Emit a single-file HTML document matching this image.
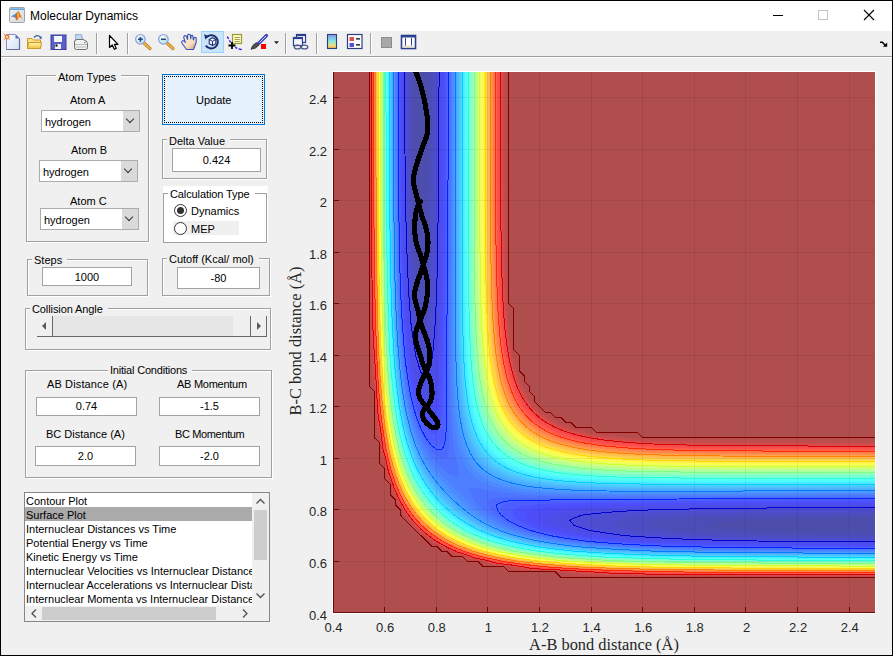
<!DOCTYPE html>
<html><head><meta charset="utf-8"><style>
*{box-sizing:border-box;margin:0;padding:0}
html,body{width:893px;height:656px;overflow:hidden;background:#f0f0f0}
body{position:relative;font-family:"Liberation Sans",sans-serif;font-size:11px;color:#000}
.a{position:absolute}
.t{position:absolute;white-space:nowrap;line-height:13px;font-size:11px;margin-top:1px}
.pn{position:absolute;border:1px solid #a0a0a0;box-shadow:inset 1px 1px 0 #fff,1px 1px 0 #fff}
.pt{position:absolute;white-space:nowrap;line-height:13px;font-size:11px;background:#f0f0f0;padding:0 5px 0 2px;margin-top:1px}
.ed{position:absolute;background:#fff;border:1px solid #a3a3a3;text-align:center;line-height:16px;font-size:11px}
.dd{position:absolute;background:#fff;border:1px solid #acacac}
.dd span{position:absolute;left:3px;top:5px;line-height:13px}
.dd i{position:absolute;right:0;top:0;bottom:0;width:16px;background:#dadada}
.dd i:after{content:"";position:absolute;left:4px;top:5px;width:5px;height:5px;border-right:1px solid #333;border-bottom:1px solid #333;transform:rotate(45deg)}
</style></head><body>
<!-- window frame -->
<div class="a" style="left:0;top:0;width:893px;height:656px;border:1px solid #000;z-index:50;pointer-events:none"></div>
<!-- title bar -->
<div class="a" style="left:1px;top:1px;width:891px;height:30px;background:#fff"></div>
<svg class="a" style="left:0;top:0" width="893" height="31" viewBox="0 0 893 31">
<defs><linearGradient id="tb" x1="0" y1="0" x2="0" y2="1"><stop offset="0" stop-color="#9cc8ec"/><stop offset="1" stop-color="#5a9ad4"/></linearGradient>
<linearGradient id="mw" x1="0" y1="0" x2="1" y2="1"><stop offset="0" stop-color="#f0f0f0"/><stop offset="1" stop-color="#d8d8d8"/></linearGradient></defs>
<rect x="9.5" y="7.5" width="15" height="15" rx="1" fill="url(#mw)" stroke="#a0a4a8"/>
<rect x="10" y="8" width="14" height="2" fill="url(#tb)"/>
<path d="M11 16.5L15 14L17.5 12L19.5 15.5L17 20.5L15.5 17.5Z" fill="#4a90d0"/>
<path d="M15 17L17.5 12L18.5 11L20 14L22 18.8L19.5 16.5L16.5 20.5Z" fill="#e06020"/>
<path d="M18 11.5L19.3 15L17.6 19.5L17.2 14Z" fill="#f8c020"/>
<!-- min/max/close -->
<rect x="773" y="15" width="10" height="1" fill="#000"/>
<rect x="818.5" y="10.5" width="9" height="9" fill="none" stroke="#c4c4c4"/>
<path d="M864 10L874 20M874 10L864 20" stroke="#000" stroke-width="1.1"/>
</svg>

<div class="t" style="left:30px;top:8px;font-size:12px;line-height:14px;letter-spacing:0">Molecular Dynamics</div>
<!-- toolbar -->
<div class="a" style="left:1px;top:31px;width:891px;height:25px;background:#f0f0f0"></div>
<div class="a" style="left:1px;top:56px;width:891px;height:1px;background:#a0a0a0"></div>
<div class="a" style="left:1px;top:57px;width:891px;height:1px;background:#fff"></div>
<svg class="a" style="left:0;top:0" width="893" height="60" viewBox="0 0 893 60">
<defs>
<linearGradient id="pg" x1="0" y1="0" x2="1" y2="1"><stop offset="0" stop-color="#ffffff"/><stop offset="1" stop-color="#cfe0f8"/></linearGradient>
<linearGradient id="fg" x1="0" y1="0" x2="0" y2="1"><stop offset="0" stop-color="#fff4b0"/><stop offset="1" stop-color="#f0c040"/></linearGradient>
<linearGradient id="cb" x1="0" y1="0" x2="0" y2="1"><stop offset="0" stop-color="#8f8fef"/><stop offset="0.45" stop-color="#80e8e0"/><stop offset="0.8" stop-color="#f0e080"/><stop offset="1" stop-color="#f0a050"/></linearGradient>
<radialGradient id="lg" cx="0.4" cy="0.4" r="0.6"><stop offset="0" stop-color="#ffffff"/><stop offset="1" stop-color="#a8e4ec"/></radialGradient>
</defs>
<!-- new -->
<path d="M6.5 34.5H15.5L19.5 38.5V49.5H6.5Z" fill="url(#pg)" stroke="#7f90d0"/>
<path d="M19.5 38.5V49.5H6.5" fill="none" stroke="#6c6c9c" stroke-width="1.2"/>
<path d="M15.5 34.5V38.5H19.5Z" fill="#5f6fb0"/>
<circle cx="7" cy="37" r="1.9" fill="#e8e070" stroke="#e8703a" stroke-width="1.2"/>
<g fill="#e8703a"><circle cx="4.4" cy="34.4" r=".6"/><circle cx="9.6" cy="34.4" r=".6"/><circle cx="4.4" cy="39.6" r=".6"/><circle cx="9.6" cy="39.6" r=".6"/></g>
<!-- open -->
<path d="M27.5 38.5H32L33.5 40H40.5V48.5H27.5Z" fill="#f8e088" stroke="#c89a20"/>
<path d="M28.5 42.5H41.5L40.5 48.5H27.5Z" fill="url(#fg)" stroke="#c89a20"/>
<path d="M34 37.5Q37 34 40.5 37" fill="none" stroke="#3a5a9a" stroke-width="1.2"/>
<path d="M39 37.8L41.8 36.2L41.4 39.4Z" fill="#3a5a9a"/>
<!-- save -->
<rect x="51" y="35" width="15" height="14.5" fill="#5a5ec8" stroke="#3d3f9a" stroke-width="1"/>
<rect x="54" y="36" width="8" height="6" fill="#f4f6ff"/>
<rect x="55" y="44" width="6" height="5" fill="#f0f0f0"/><rect x="55.5" y="44.5" width="2" height="2" fill="#000"/>
<!-- print -->
<path d="M75.5 34.5H81.5L83 40H75.5Z" fill="#bcd8f4" stroke="#8ea0c0" stroke-width=".8"/>
<path d="M74.5 42Q74.5 39.5 77 39.5H83Q87.5 40.5 87.5 43.5V47.5Q87.5 49.5 85.5 49.5H76.5Q74.5 49.5 74.5 47.5Z" fill="#f2f2f2" stroke="#707070"/>
<path d="M75 44.5H87M75.5 47H86.5" stroke="#a8a8a8" stroke-width=".8"/><rect x="84" y="42" width="1.5" height="1.2" fill="#40c040"/>
<!-- separators -->
<g fill="#a0a0a0"><rect x="96" y="33" width="1" height="21"/><rect x="127" y="33" width="1" height="21"/><rect x="285" y="33" width="1" height="21"/><rect x="316" y="33" width="1" height="21"/><rect x="370" y="33" width="1" height="21"/></g>
<g fill="#fff"><rect x="97" y="33" width="1" height="21"/><rect x="128" y="33" width="1" height="21"/><rect x="286" y="33" width="1" height="21"/><rect x="317" y="33" width="1" height="21"/><rect x="371" y="33" width="1" height="21"/></g>
<!-- arrow cursor -->
<path d="M109.5 35.5V47.5L112.3 45L114.3 49.3L116.3 48.4L114.4 44.3H118Z" fill="#fff" stroke="#000" stroke-width="1.2" stroke-linejoin="round"/>
<!-- zoom in -->
<path d="M144.5 43.5L150 48.5" stroke="#b07a20" stroke-width="3.2" stroke-linecap="round"/>
<path d="M144.5 43.5L150 48.5" stroke="#f0b040" stroke-width="2" stroke-linecap="round"/>
<circle cx="140.4" cy="39.3" r="4.8" fill="url(#lg)" stroke="#9a9ad8" stroke-width="1.2"/>
<path d="M138 39.3H142.8M140.4 36.9V41.7" stroke="#2b3f7f" stroke-width="1.6"/>
<!-- zoom out -->
<path d="M167.5 43.5L173 48.5" stroke="#b07a20" stroke-width="3.2" stroke-linecap="round"/>
<path d="M167.5 43.5L173 48.5" stroke="#f0b040" stroke-width="2" stroke-linecap="round"/>
<circle cx="163.4" cy="39.3" r="4.8" fill="url(#lg)" stroke="#9a9ad8" stroke-width="1.2"/>
<path d="M161 39.3H165.8" stroke="#2b3f7f" stroke-width="1.6"/>
<!-- hand -->
<defs><linearGradient id="hg" x1="0.2" y1="0.3" x2="0.8" y2="1"><stop offset="0" stop-color="#fdebd6"/><stop offset="0.6" stop-color="#f8dcc0"/><stop offset="1" stop-color="#e0a060"/></linearGradient></defs>
<path d="M186.5 49.5L181.5 42.5L182.5 40.8L184 40.8L185.3 42.5L183.6 37L184.6 35.6L186 35.8L187.6 39.5L187.6 35L188.6 34.3L190.2 34.5L190.7 39L191.3 35.5L192.7 35.3L193.3 40L194.5 37.3L196.2 37.8L196.2 42.5L195 45.5L193.5 49.5Z" fill="url(#hg)" stroke="#3558c0" stroke-width="1.1" stroke-linejoin="round"/>
<!-- rotate (active) -->
<rect x="201.5" y="31.5" width="22" height="21" fill="#cce4f7" stroke="#99d1ff"/>
<path d="M207.2 36.6A6.6 6.6 0 1 1 205.8 45.6" fill="none" stroke="#1f3070" stroke-width="2"/>
<path d="M204.2 34.2L209.2 36.2L205.2 39.6Z" fill="#1f3070"/>
<path d="M212.5 37.8L215.8 39.5V43.8L212.5 45.5L209.2 43.8V39.5Z" fill="#f4f8ff" stroke="#1f3070" stroke-width="1.1" stroke-linejoin="round"/>
<path d="M209.4 39.6L212.5 41.3L215.6 39.6M212.5 41.3V45.3" fill="none" stroke="#1f3070" stroke-width="1"/>
<!-- data cursor -->
<rect x="232.5" y="34.5" width="9" height="9" fill="#fdfac8" stroke="#9a9a30" stroke-width="1.2"/>
<path d="M234.5 37.5H239.8M234.5 39.5H239.8M234.5 41.5H239.8" stroke="#a8a050" stroke-width="1"/>
<path d="M227.3 36.6L228.6 38.8M229.4 40.4L230.6 42.3M235.2 47.3L237.3 48.3M238.6 48.8L241.8 49.6" stroke="#1a1aff" stroke-width="1.3"/>
<path d="M228.5 45.5H235.5M232 42V49" stroke="#000" stroke-width="1.8"/>
<!-- brush -->
<path d="M258.5 43.5L266.5 35.5" stroke="#3a48b8" stroke-width="3.2" stroke-linecap="round"/>
<path d="M259.5 42.5L266 36" stroke="#c8d0ff" stroke-width="1"/>
<path d="M251 49.3Q252 45 256.5 42.5L259 45Q256 49 251 49.3Z" fill="#505050" stroke="#303030" stroke-width=".8"/>
<rect x="261" y="44" width="5" height="5" fill="#ff0000"/>
<path d="M274 41.3H279L276.5 44Z" fill="#202020"/>
<!-- link -->
<rect x="296.5" y="34.5" width="9" height="8" fill="#fff" stroke="#2a3f8f" stroke-width="1.2"/>
<rect x="296.5" y="34.5" width="9" height="1.6" fill="#2a3f8f"/>
<rect x="293.5" y="37.5" width="9" height="8" fill="#f4f6fb" stroke="#2a3f8f" stroke-width="1.2"/>
<rect x="293.5" y="37.5" width="9" height="1.6" fill="#2a3f8f"/>
<ellipse cx="297.5" cy="47" rx="3.3" ry="1.9" fill="none" stroke="#4a5a8a" stroke-width="1.3"/>
<ellipse cx="304.5" cy="47" rx="3.3" ry="1.9" fill="none" stroke="#4a5a8a" stroke-width="1.3"/>
<!-- colorbar -->
<rect x="327.5" y="34.5" width="9" height="14" fill="url(#cb)" stroke="#2a3f7f" stroke-width="1.1"/>
<!-- legend -->
<rect x="347.5" y="34.5" width="14.5" height="14" fill="#fff" stroke="#2a3f7f" stroke-width="1.2"/>
<rect x="349.5" y="37" width="4.5" height="4" fill="#e05050"/><rect x="349.5" y="43" width="4.5" height="4" fill="#5050e0"/>
<path d="M356 38.8H360M356 44.8H360" stroke="#000" stroke-width="1.2"/>
<!-- hide plot tools -->
<rect x="381.5" y="37.5" width="10" height="10" fill="#a8a8a8" stroke="#8c8c8c"/>
<!-- show plot tools -->
<rect x="401.5" y="35.5" width="14" height="13" fill="#fff" stroke="#2a3f8f" stroke-width="1.6"/>
<rect x="401.5" y="35.5" width="14" height="2" fill="#2a3f8f"/>
<rect x="402.5" y="45.5" width="12" height="2" fill="#e8e0c0"/>
<path d="M405.5 38V45.5M411.5 38V45.5" stroke="#2a3f8f" stroke-width="1"/>
<!-- far right arrow -->
<path d="M880 42.3H882.3L885.5 45.5" fill="none" stroke="#000" stroke-width="1.5"/><path d="M882.8 46.8H887.2V42.4Z" fill="#000"/>
</svg>


<!-- Atom Types panel -->
<div class="pn" style="left:26px;top:75px;width:123px;height:167px"></div>
<div class="pt" style="left:56px;top:70px">Atom Types</div>
<div class="t" style="left:70px;top:93px">Atom A</div>
<div class="dd" style="left:41px;top:110px;width:99px;height:22px"><span>hydrogen</span><i></i></div>
<div class="t" style="left:71px;top:143px">Atom B</div>
<div class="dd" style="left:39px;top:160px;width:99px;height:22px"><span>hydrogen</span><i></i></div>
<div class="t" style="left:70px;top:194px">Atom C</div>
<div class="dd" style="left:40px;top:208px;width:99px;height:22px"><span>hydrogen</span><i></i></div>

<!-- Update button -->
<div class="a" style="left:162px;top:74px;width:103px;height:51px;background:#e5f1fb;border:1px solid #0078d7"></div>
<div class="a" style="left:164px;top:76px;width:99px;height:47px;border:1px dotted #000"></div>
<div class="t" style="left:196px;top:93px">Update</div>

<!-- Delta value -->
<div class="pn" style="left:162px;top:139px;width:105px;height:40px"></div>
<div class="pt" style="left:167px;top:134px">Delta Value</div>
<div class="ed" style="left:172px;top:148px;width:89px;height:24px;line-height:22px">0.424</div>

<!-- Calculation type -->
<div class="a" style="left:163px;top:186px;width:105px;height:57px;background:#fff"></div>
<div class="pn" style="left:163px;top:193px;width:104px;height:50px;box-shadow:none"></div>
<div class="pt" style="left:168px;top:187px;background:#fff;letter-spacing:-0.1px">Calculation Type</div>
<div class="a" style="left:173px;top:221px;width:66px;height:14px;background:#f0f0f0"></div>
<div class="a" style="left:174px;top:204px;width:13px;height:13px;border:1px solid #333;border-radius:50%;background:#fff"></div>
<div class="a" style="left:177px;top:207px;width:7px;height:7px;border-radius:50%;background:#333"></div>
<div class="t" style="left:191px;top:204px">Dynamics</div>
<div class="a" style="left:174px;top:222px;width:13px;height:13px;border:1px solid #333;border-radius:50%;background:#fff"></div>
<div class="t" style="left:191px;top:222px">MEP</div>

<!-- Steps -->
<div class="pn" style="left:27px;top:259px;width:121px;height:37px"></div>
<div class="pt" style="left:32px;top:253px">Steps</div>
<div class="ed" style="left:42px;top:267px;width:90px;height:19px;line-height:18px">1000</div>

<!-- Cutoff -->
<div class="pn" style="left:162px;top:258px;width:108px;height:38px"></div>
<div class="pt" style="left:167px;top:252px">Cutoff (Kcal/ mol)</div>
<div class="ed" style="left:177px;top:267px;width:83px;height:22px;line-height:20px">-80</div>

<!-- Collision angle -->
<div class="pn" style="left:25px;top:308px;width:246px;height:42px"></div>
<div class="pt" style="left:30px;top:302px;letter-spacing:-0.1px">Collision Angle</div>
<div class="a" style="left:37px;top:316px;width:230px;height:21px;background:#e6e6e6;border-bottom:1px solid #696969"></div>
<div class="a" style="left:37px;top:316px;width:16px;height:21px;background:#f0f0f0;border-right:1px solid #696969;border-bottom:1px solid #696969"></div>
<div class="a" style="left:42px;top:322px;width:0;height:0;border-top:4px solid transparent;border-bottom:4px solid transparent;border-right:4px solid #5a5a5a"></div>
<div class="a" style="left:233px;top:316px;width:18px;height:21px;background:#f0f0f0;border-right:1px solid #696969;border-bottom:1px solid #696969"></div>
<div class="a" style="left:251px;top:316px;width:16px;height:21px;background:#f0f0f0;border-right:1px solid #696969;border-bottom:1px solid #696969"></div>
<div class="a" style="left:257px;top:322px;width:0;height:0;border-top:4px solid transparent;border-bottom:4px solid transparent;border-left:4px solid #5a5a5a"></div>

<!-- Initial conditions -->
<div class="pn" style="left:25px;top:370px;width:247px;height:108px"></div>
<div class="pt" style="left:108px;top:363px;letter-spacing:-0.2px">Initial Conditions</div>
<div class="t" style="left:47px;top:377px;letter-spacing:0.13px">AB Distance (A)</div>
<div class="ed" style="left:36px;top:397px;width:101px;height:19px">0.74</div>
<div class="t" style="left:177px;top:377px;letter-spacing:-0.27px">AB Momentum</div>
<div class="ed" style="left:159px;top:397px;width:101px;height:19px">-1.5</div>
<div class="t" style="left:46px;top:427px">BC Distance (A)</div>
<div class="ed" style="left:35px;top:446px;width:101px;height:20px;line-height:18px">2.0</div>
<div class="t" style="left:175px;top:427px;letter-spacing:-0.36px">BC Momentum</div>
<div class="ed" style="left:159px;top:446px;width:101px;height:20px;line-height:18px">-2.0</div>

<!-- listbox -->
<div class="a" style="left:24px;top:492px;width:246px;height:130px;background:#fff;border:1px solid #828790;overflow:hidden">
  <div class="a" style="left:0;top:14px;width:227px;height:14px;background:#aaaaaa"></div>
  <div class="t" style="left:1px;top:0px;line-height:14px;letter-spacing:0">Contour Plot<br>Surface Plot<br>Internuclear Distances vs Time<br>Potential Energy vs Time<br>Kinetic Energy vs Time<br>Internuclear Velocities vs Internuclear Distance<br>Internuclear Accelerations vs Internuclear Distance<br>Internuclear Momenta vs Internuclear Distance</div>
  <div class="a" style="left:227px;top:0;width:17px;height:113px;background:#f0f0f0"></div>
  <div class="a" style="left:229px;top:17px;width:13px;height:50px;background:#cdcdcd"></div>
  <div class="a" style="left:0;top:113px;width:244px;height:15px;background:#f0f0f0"></div>
  <div class="a" style="left:17px;top:114px;width:174px;height:13px;background:#cdcdcd"></div>
  <svg class="a" style="left:0;top:0" width="246" height="130" viewBox="0 0 246 130">
<path d="M231.5 10.5L235.5 6.5L239.5 10.5" fill="none" stroke="#505050" stroke-width="1.3"/>
<path d="M231.5 100.5L235.5 104.5L239.5 100.5" fill="none" stroke="#505050" stroke-width="1.3"/>
<path d="M11 116.5L7 120.5L11 124.5" fill="none" stroke="#505050" stroke-width="1.3"/>
<path d="M218 116.5L222 120.5L218 124.5" fill="none" stroke="#505050" stroke-width="1.3"/>
</svg>

</div>

<!-- axes -->
<svg class="a" style="left:0;top:0" width="893" height="656" viewBox="0 0 893 656">
<defs><clipPath id="pc"><rect x="333" y="72" width="542" height="541"/></clipPath></defs>
<rect x="332" y="71" width="544" height="543" fill="#fff"/>
<g clip-path="url(#pc)">
<rect x="333" y="72" width="542" height="541" fill="#b04d4d"/>
<path fill="#b54d4d" d="M508.8 71.7 508.8 303.3 512.7 303.3 513.9 304.6 513.9 349.4 519.1 349.4 520.3 350.7 520.3 369.9 524.2 369.9 525.5 371.2 525.5 380.1 529.3 380.1 530.6 381.4 530.6 390.4 534.4 390.4 535.7 391.7 535.7 400.6 539.6 400.6 540.8 401.9 540.8 405.7 544.7 405.7 546.0 407.0 546.0 410.8 554.9 410.9 556.2 412.1 556.2 416.0 565.2 416.0 566.5 417.2 566.5 421.1 575.4 421.1 576.7 422.4 576.7 426.2 596.0 426.2 597.2 427.5 597.2 432.6 642.1 432.6 643.4 433.9 643.4 437.7 875.3 437.7 875.3 577.2 556.2 577.2 554.9 575.9 554.9 572.1 503.7 572.1 502.4 570.8 502.4 567.0 478.1 567.0 476.8 565.7 476.8 561.9 462.7 561.9 461.4 560.6 461.4 556.7 447.3 556.7 446.0 555.5 446.0 551.6 437.0 551.6 435.8 550.3 435.8 546.5 426.8 546.5 425.5 545.2 425.5 541.4 421.7 541.4 420.4 540.1 420.4 536.3 416.5 536.3 415.3 535.0 415.3 531.2 411.4 531.2 410.1 529.9 410.1 526.0 406.3 526.0 405.0 524.8 405.0 520.9 401.2 520.9 399.9 519.6 399.9 510.7 396.0 510.7 394.8 509.4 394.8 500.4 390.9 500.4 389.6 499.2 389.6 485.1 385.8 485.1 384.5 483.8 384.5 469.7 380.7 469.7 379.4 468.4 379.4 444.1 375.5 444.1 374.3 442.8 374.3 391.7 370.4 391.7 369.1 390.4 369.1 71.7 508.8 71.7Z"/>
<path fill="#bf4d4d" d="M506.2 71.7 506.3 144.6 506.5 201.0 507.2 267.5 507.7 303.3 508.0 309.7 508.8 320.2 509.7 322.5 510.4 325.1 511.5 331.5 512.2 339.2 512.8 350.7 513.9 357.0 515.2 358.9 516.5 362.2 517.2 366.1 517.8 371.2 519.1 376.0 520.3 377.4 521.3 378.9 522.5 382.7 523.2 386.5 524.2 388.5 525.5 389.5 526.8 391.3 528.0 394.1 528.9 396.8 529.3 397.5 530.6 398.3 531.6 399.3 532.8 401.9 534.4 403.9 535.7 404.8 536.6 405.7 537.5 407.0 539.6 409.1 540.8 409.9 541.8 410.8 542.7 412.1 544.7 413.7 547.3 415.0 548.3 416.0 549.1 417.2 549.8 417.7 552.5 418.5 555.3 419.8 557.1 421.1 558.1 422.4 560.1 423.3 563.9 424.1 566.9 424.9 569.0 426.1 570.6 427.5 575.4 428.7 581.9 429.5 585.7 430.5 587.8 431.3 589.6 432.6 596.0 433.7 608.8 434.5 616.5 435.3 621.6 436.2 624.1 436.9 626.5 437.7 637.0 438.6 643.4 438.8 715.1 439.7 783.0 440.2 875.3 440.3 875.3 576.7 669.0 576.6 625.4 576.5 598.5 576.2 580.6 575.7 571.6 575.1 567.8 574.5 565.2 573.9 562.6 572.9 561.5 572.1 556.2 571.7 530.6 571.2 524.2 571.0 517.8 570.5 515.2 570.1 512.7 569.4 510.7 568.3 509.6 567.0 508.8 566.8 503.7 566.3 493.4 565.9 487.0 565.2 484.5 564.4 482.7 563.1 481.5 561.9 478.1 561.2 472.9 560.8 467.8 560.1 466.5 559.7 465.2 558.9 464.5 558.0 463.9 556.7 462.7 556.2 455.0 555.2 453.7 554.9 452.4 554.4 451.1 553.7 450.2 552.9 449.3 551.6 447.3 550.8 443.5 549.9 441.3 549.1 439.6 547.9 438.7 546.5 437.0 545.5 434.5 544.7 433.2 544.1 432.1 542.7 431.5 541.4 430.6 540.9 429.4 540.6 426.8 539.5 424.2 537.9 423.1 536.3 421.7 535.0 419.1 533.6 418.0 532.4 417.4 531.2 416.5 530.0 415.3 529.0 414.0 528.4 412.8 527.3 411.4 524.7 410.1 523.4 408.5 522.2 406.9 519.6 405.8 517.1 405.5 515.8 405.0 515.0 403.7 514.3 402.3 513.2 401.7 512.0 400.9 509.4 399.9 507.7 398.5 506.8 397.3 505.2 396.4 503.0 395.6 499.2 394.8 497.2 393.5 496.3 392.7 495.3 391.5 492.8 391.0 490.2 390.2 483.8 389.6 482.5 388.4 481.9 387.5 481.2 386.7 480.0 386.0 477.4 385.6 473.6 385.2 468.4 384.5 465.0 383.2 463.8 382.0 462.0 381.5 460.8 380.9 458.2 380.4 451.8 380.0 442.8 379.4 436.9 378.1 435.8 377.0 433.9 376.3 431.3 375.8 427.5 375.1 416.0 374.7 390.4 374.3 385.1 373.5 384.0 372.4 381.4 371.8 378.9 371.3 375.0 370.6 364.8 370.2 346.9 369.9 318.7 369.7 273.9 369.6 71.7 506.2 71.7Z"/>
<path fill="#c94d4d" d="M503.7 71.7 503.7 143.4 504.3 201.0 505.1 241.9 506.6 303.3 507.3 314.9 508.8 330.9 509.8 335.3 510.4 339.2 511.7 350.7 512.5 355.8 513.9 362.4 515.3 366.1 516.4 371.2 517.8 376.3 519.1 379.8 520.6 382.7 521.8 386.5 524.2 391.4 525.5 393.1 527.3 396.8 529.3 399.9 534.4 406.3 540.2 412.1 546.7 417.2 549.8 419.3 552.4 420.4 555.2 422.4 560.1 424.7 563.9 426.0 566.8 427.5 570.3 428.7 575.4 430.1 580.6 431.2 584.2 432.6 590.8 434.0 596.0 434.9 607.5 436.1 611.3 436.7 615.8 437.7 630.6 439.1 642.1 439.8 720.3 441.8 752.3 442.3 788.2 442.7 875.3 442.9 875.3 576.3 689.5 576.1 638.2 575.8 608.8 575.5 592.1 575.1 580.6 574.4 572.9 573.4 570.3 572.9 567.9 572.1 554.9 571.1 533.2 570.6 526.8 570.2 521.6 569.8 519.1 569.4 516.5 568.8 513.9 567.8 512.6 567.0 508.8 566.3 503.7 565.7 494.7 565.2 489.3 564.4 487.0 563.7 485.8 563.1 484.3 561.9 478.1 560.5 472.9 560.0 469.5 559.3 467.8 558.7 466.5 557.8 465.6 556.7 462.8 555.5 457.6 554.8 455.0 554.1 453.7 553.5 452.9 552.9 451.6 551.6 448.5 550.3 444.7 549.2 443.5 548.7 442.2 547.8 440.9 546.5 434.5 543.4 433.6 542.7 432.8 541.4 431.9 540.6 430.6 539.9 429.4 539.5 427.9 538.8 426.3 537.6 425.1 536.3 423.0 534.7 420.1 532.4 417.7 529.9 414.0 526.3 411.7 523.5 410.1 521.3 408.9 520.1 407.6 518.5 406.9 517.1 406.5 515.8 405.8 514.5 405.0 513.7 403.7 512.8 403.0 512.0 399.9 505.5 398.6 504.3 397.7 503.0 397.2 501.7 396.0 497.9 394.8 494.8 392.9 492.8 392.2 491.2 391.6 488.9 390.9 483.6 389.6 480.9 388.4 479.7 387.7 478.7 387.2 477.4 386.4 473.6 385.9 468.4 384.8 463.3 384.5 462.2 383.3 460.8 382.6 459.5 381.9 456.9 381.2 451.8 380.7 442.8 380.1 437.7 379.4 433.9 378.1 431.7 377.2 428.8 376.3 422.4 375.8 412.1 375.3 391.7 374.3 378.8 373.5 376.3 372.7 372.5 371.9 364.8 371.3 353.3 370.8 336.6 370.5 307.2 370.3 253.4 370.1 71.7 503.7 71.7Z"/>
<path fill="#d24d4d" d="M502.7 71.7 502.8 175.4 503.4 236.8 503.7 254.5 505.6 303.3 506.6 318.7 507.5 329.1 508.8 339.9 511.4 355.8 513.9 367.4 516.5 376.3 518.3 381.4 520.4 386.5 524.2 394.2 526.5 398.1 529.3 402.3 534.4 408.5 539.5 413.4 544.3 417.2 548.5 420.1 552.4 422.4 560.1 426.2 565.2 428.2 570.3 430.0 581.9 433.3 592.1 435.4 606.8 437.7 611.3 438.3 622.9 439.5 638.2 440.7 694.6 442.9 725.4 443.4 761.3 443.7 875.3 443.8 875.3 575.8 694.6 575.6 648.5 575.4 619.0 575.0 603.6 574.6 592.1 574.1 581.9 573.2 574.8 572.1 558.3 570.8 534.4 570.0 524.2 569.2 519.1 568.2 515.8 567.0 508.9 565.7 496.0 564.6 490.9 563.8 488.3 562.9 486.4 561.9 483.2 560.9 471.6 558.9 469.1 558.0 467.2 556.7 464.0 555.3 462.7 554.9 458.6 554.2 456.3 553.6 454.9 552.9 453.3 551.6 452.4 551.2 444.7 548.2 443.5 547.5 442.2 546.3 435.8 543.1 434.5 542.1 432.4 540.1 429.4 538.6 428.1 537.8 426.6 536.3 423.0 533.7 420.4 531.2 417.8 528.9 415.3 526.0 412.7 523.5 410.1 519.8 408.6 518.4 407.8 517.1 406.3 514.0 404.3 512.0 403.3 510.7 400.1 504.3 398.9 503.0 398.2 501.7 395.2 494.0 394.8 493.2 393.5 491.6 392.8 490.2 392.2 487.9 391.5 483.8 390.9 482.1 389.6 479.3 388.4 477.4 387.9 476.1 387.2 473.6 386.5 468.4 385.5 463.3 384.5 460.1 383.2 457.7 382.3 454.4 381.6 449.2 380.7 437.7 379.4 430.7 378.2 427.5 377.6 424.9 376.7 417.2 376.2 408.3 375.5 388.3 374.3 371.8 373.1 364.8 372.3 354.5 371.7 341.7 371.3 325.1 370.9 293.1 370.7 247.0 370.6 71.7 502.7 71.7Z"/>
<path fill="#dc4d4d" d="M501.7 71.7 501.9 175.4 502.4 236.8 502.9 262.4 503.5 282.9 504.8 308.5 505.5 318.7 507.0 334.1 508.8 347.7 511.0 359.7 513.7 371.2 515.2 376.3 517.0 381.4 519.0 386.5 520.7 390.4 524.2 397.0 526.8 401.0 529.2 404.5 531.3 407.0 534.4 410.5 538.3 414.2 542.0 417.2 545.6 419.8 549.8 422.5 554.9 425.2 560.1 427.6 565.2 429.6 570.3 431.3 575.4 432.8 581.9 434.5 589.5 436.1 596.0 437.2 611.3 439.4 622.9 440.6 638.2 441.7 663.9 443.0 694.6 443.9 725.4 444.4 761.3 444.6 875.3 444.8 875.3 575.4 704.9 575.2 658.7 574.9 628.0 574.6 611.3 574.1 598.5 573.6 589.5 572.9 582.6 572.1 564.2 570.8 554.9 570.2 538.3 569.6 528.0 568.8 524.2 568.3 519.1 567.0 511.4 565.6 508.8 565.2 498.6 564.3 493.4 563.5 490.9 562.8 488.6 561.9 484.2 560.6 472.9 558.4 470.4 557.5 469.0 556.7 465.9 555.5 462.7 554.4 458.8 553.5 456.9 552.9 452.4 550.4 448.7 549.1 445.7 547.8 441.8 545.2 438.9 544.0 436.6 542.7 433.2 539.9 431.9 539.1 429.1 537.6 426.3 535.0 424.2 533.7 423.0 532.7 421.6 531.2 418.6 528.6 415.3 524.8 413.8 523.5 412.7 522.2 411.4 520.2 408.9 517.3 407.3 514.5 406.5 513.2 403.7 509.9 402.4 507.6 401.2 504.7 398.6 500.8 397.3 497.8 396.0 494.0 393.5 489.6 392.8 487.6 392.0 483.8 391.6 482.5 389.6 477.5 388.3 474.8 387.6 472.3 385.8 462.3 384.5 457.9 383.2 454.5 382.6 451.8 382.1 448.0 381.1 437.7 379.4 427.5 378.1 422.4 377.2 414.7 376.6 405.7 376.1 390.4 374.3 364.0 373.3 355.8 372.7 346.9 372.2 334.1 371.8 317.4 371.4 288.0 371.2 241.9 370.9 71.7 501.7 71.7Z"/>
<path fill="#e64d4d" d="M500.8 71.7 500.9 179.2 501.5 241.9 502.0 267.5 502.7 288.0 503.5 304.6 504.6 320.0 506.1 335.3 508.0 349.4 510.0 360.9 512.5 371.2 513.9 376.3 515.6 381.4 517.6 386.5 519.3 390.4 523.3 398.1 525.7 401.9 528.0 405.2 530.5 408.3 534.0 412.1 538.2 416.0 540.8 418.1 544.7 420.9 549.8 424.0 554.9 426.7 559.6 428.8 565.2 430.9 570.3 432.6 575.4 434.1 581.9 435.7 588.3 437.0 596.0 438.4 611.3 440.5 628.0 442.0 647.2 443.3 669.0 444.2 694.6 444.9 725.4 445.3 761.3 445.6 875.3 445.7 875.3 575.0 710.0 574.8 665.1 574.5 634.4 574.1 617.7 573.7 603.6 573.0 591.4 572.1 556.2 569.9 539.6 569.2 529.4 568.3 525.5 567.6 522.6 567.0 508.8 564.8 498.6 563.7 494.7 563.0 485.7 560.5 474.1 558.0 462.7 553.8 460.1 553.2 457.6 552.4 453.7 550.3 447.3 547.8 442.2 544.8 438.3 542.9 432.6 538.8 429.4 536.8 426.8 534.6 423.8 532.4 421.3 529.9 419.1 528.1 416.5 525.2 414.0 522.6 411.8 519.6 409.6 517.1 407.2 513.2 403.7 508.5 401.6 504.3 398.6 499.2 396.0 492.8 394.0 488.9 392.1 482.5 390.9 479.1 388.7 473.6 388.0 471.0 385.9 460.8 384.5 455.6 383.7 453.1 383.1 450.5 382.5 446.7 381.6 437.7 379.4 423.9 378.3 418.5 377.6 412.1 377.0 403.2 376.5 390.4 374.3 355.3 373.2 340.5 372.6 326.4 372.2 308.5 371.8 277.7 371.6 231.7 371.3 71.7 500.8 71.7Z"/>
<path fill="#f04d4d" d="M499.9 71.7 500.0 179.2 500.5 241.9 501.0 267.5 501.7 288.0 502.5 304.6 503.5 320.0 505.0 335.3 506.8 349.4 508.8 360.9 511.2 371.2 514.3 381.4 516.2 386.5 518.4 391.7 520.3 395.6 522.5 399.3 524.2 402.2 526.8 405.8 529.3 409.0 532.1 412.1 535.7 415.7 539.6 418.9 544.4 422.4 547.3 424.1 551.1 426.3 556.2 428.7 561.4 430.9 566.5 432.7 571.6 434.3 579.3 436.3 585.7 437.7 592.1 438.9 607.5 441.1 622.9 442.7 643.4 444.1 663.9 445.0 689.5 445.7 720.3 446.2 756.1 446.5 875.3 446.7 875.3 574.6 720.3 574.4 674.1 574.1 642.1 573.7 624.1 573.2 610.0 572.6 584.4 571.3 554.9 569.4 543.4 568.9 531.9 567.9 508.8 564.4 499.8 563.3 496.0 562.6 483.2 559.4 475.5 557.7 462.7 553.3 458.8 552.1 453.7 549.8 447.3 547.1 442.2 544.1 439.2 542.7 429.8 536.3 424.2 531.9 419.3 527.3 414.5 522.2 410.1 516.7 404.3 508.1 398.7 497.9 397.2 494.0 394.2 487.6 393.1 483.8 389.0 472.3 387.0 463.3 383.8 450.5 383.3 448.0 382.0 437.7 378.6 416.0 377.9 409.6 373.7 335.3 373.1 321.3 372.7 303.3 372.3 272.6 372.0 226.6 371.7 71.7 499.9 71.7Z"/>
<path fill="#fa4d4d" d="M498.9 71.7 499.0 179.2 499.6 241.9 500.1 267.5 500.7 288.0 501.6 307.2 502.7 322.5 504.2 337.9 505.9 350.7 508.5 364.8 511.0 375.0 513.9 384.2 516.9 391.7 519.4 396.8 521.6 400.6 525.9 407.0 529.3 411.2 531.9 413.9 535.4 417.2 539.6 420.7 543.4 423.3 547.3 425.7 550.5 427.5 556.2 430.2 561.4 432.2 566.5 434.0 571.6 435.5 579.3 437.5 592.1 440.0 607.5 442.2 622.9 443.7 643.4 445.1 663.9 446.0 689.5 446.7 720.3 447.2 756.1 447.4 875.3 447.6 875.3 574.3 725.4 574.0 679.2 573.7 648.5 573.3 625.4 572.6 592.1 571.2 544.7 568.5 534.4 567.6 498.6 562.5 475.5 557.1 458.8 551.5 447.3 546.4 439.6 542.2 430.8 536.3 425.5 532.1 420.2 527.3 415.3 522.0 410.3 515.8 404.2 506.8 399.4 497.9 394.4 486.4 389.3 471.0 383.6 446.7 378.9 413.4 378.2 407.0 376.0 371.2 374.9 349.4 373.7 320.0 373.1 296.9 372.7 265.0 372.4 221.4 372.1 71.7 498.9 71.7Z"/>
<path fill="#ff524d" d="M498.0 71.7 498.1 179.2 498.6 241.9 499.1 267.5 499.7 288.0 500.6 307.2 501.7 322.5 503.1 337.9 504.8 350.7 507.3 364.8 509.7 375.0 512.5 384.0 515.5 391.7 519.3 399.3 520.8 401.9 524.2 407.1 528.0 411.9 530.6 414.7 534.4 418.3 537.8 421.1 540.8 423.3 546.0 426.5 549.8 428.6 554.9 431.0 560.1 433.1 565.2 434.9 570.3 436.5 576.7 438.1 583.1 439.5 590.8 441.0 606.2 443.1 622.9 444.8 642.1 446.1 663.9 447.0 689.5 447.7 720.3 448.1 756.1 448.4 875.3 448.6 875.3 573.9 725.4 573.6 679.2 573.2 648.5 572.7 611.3 571.6 580.6 570.2 544.7 568.0 538.3 567.5 529.3 566.4 502.4 562.6 496.0 561.4 476.8 556.9 467.8 554.0 458.8 550.8 449.9 547.0 447.3 545.7 439.6 541.5 431.8 536.3 425.5 531.3 420.4 526.6 415.3 521.1 411.0 515.8 405.0 506.8 399.4 496.6 394.8 485.6 389.5 469.7 385.3 451.8 384.0 445.4 380.0 417.2 378.5 404.5 376.4 371.2 375.2 345.6 374.0 311.0 373.5 289.3 373.0 257.3 372.8 215.0 372.5 71.7 498.0 71.7Z"/>
<path fill="#ff5d4d" d="M497.0 71.7 497.1 179.2 497.6 241.9 498.1 267.5 498.7 288.0 499.7 308.5 500.7 323.8 502.2 339.2 504.0 353.3 506.3 366.1 508.8 376.3 510.3 381.4 512.1 386.5 514.1 391.7 515.8 395.5 519.2 401.9 521.6 405.8 524.2 409.4 526.8 412.6 530.6 416.7 534.4 420.2 537.2 422.4 540.8 424.9 544.8 427.5 549.8 430.1 554.9 432.5 560.1 434.5 565.2 436.2 570.3 437.7 576.7 439.3 583.1 440.7 590.8 442.1 606.2 444.2 622.9 445.8 642.1 447.1 663.9 448.0 689.5 448.6 720.3 449.1 756.1 449.3 875.3 449.5 875.3 573.5 730.5 573.2 684.4 572.8 653.6 572.3 617.7 571.4 581.9 569.9 546.0 567.7 530.6 566.0 503.7 562.3 498.6 561.4 488.3 559.1 479.3 557.0 475.5 555.9 462.4 551.6 457.6 549.7 450.3 546.5 440.9 541.5 431.9 535.6 426.3 531.2 420.7 526.0 415.9 520.9 411.4 515.3 405.0 505.8 399.9 496.2 394.8 484.0 389.7 468.4 386.1 453.1 384.1 442.8 381.2 422.4 379.9 412.1 378.8 401.9 376.8 371.2 375.8 349.4 374.7 320.0 373.8 282.9 373.4 252.2 373.2 208.6 372.9 71.7 497.0 71.7Z"/>
<path fill="#ff684d" d="M496.1 71.7 496.2 180.5 496.7 244.5 497.1 267.5 497.8 289.3 498.6 308.5 499.8 325.1 501.2 340.5 503.1 354.5 505.1 366.1 507.5 376.3 509.0 381.4 510.7 386.5 512.6 391.7 514.3 395.5 516.9 400.6 519.1 404.4 520.7 407.0 523.5 410.8 525.6 413.4 529.3 417.5 534.4 422.1 537.0 424.0 540.8 426.7 544.7 429.0 549.8 431.6 554.9 433.9 560.1 435.8 565.2 437.5 570.3 439.0 576.7 440.6 583.1 441.9 590.8 443.3 606.2 445.3 622.9 446.9 642.1 448.1 663.9 449.0 689.5 449.6 720.3 450.1 756.1 450.3 875.3 450.4 875.3 573.1 721.5 572.7 679.2 572.3 639.5 571.5 601.1 570.3 570.3 568.8 544.7 567.1 524.2 564.8 503.7 561.8 493.4 559.8 480.6 556.8 472.9 554.5 464.0 551.6 451.6 546.5 440.9 540.8 433.9 536.3 427.3 531.2 420.4 524.8 415.6 519.6 411.6 514.5 408.0 509.4 405.0 504.6 399.9 494.9 394.8 482.4 390.3 468.4 387.8 458.2 384.5 442.6 381.6 422.4 380.2 410.8 379.2 400.6 377.5 375.0 376.3 350.7 375.1 318.7 374.4 288.0 373.9 252.2 373.6 211.2 373.3 71.7 496.1 71.7Z"/>
<path fill="#ff744d" d="M495.1 71.7 495.2 184.3 495.7 247.0 496.2 272.6 496.9 293.1 497.8 312.3 498.9 327.7 500.4 343.0 502.1 355.8 503.4 363.5 504.7 369.9 507.3 380.1 508.9 385.3 510.7 390.4 513.9 397.9 516.0 401.9 518.2 405.7 522.7 412.1 525.9 416.0 529.3 419.4 532.6 422.4 535.9 424.9 539.6 427.5 544.7 430.5 549.8 433.1 554.6 435.2 560.1 437.2 565.2 438.8 570.3 440.3 576.7 441.8 583.1 443.1 590.8 444.4 606.2 446.4 622.9 447.9 642.1 449.1 663.9 450.0 689.5 450.6 720.3 451.0 756.1 451.3 875.3 451.4 875.3 572.7 726.7 572.3 679.2 571.8 642.1 571.2 602.4 570.0 570.3 568.4 546.0 566.7 524.2 564.3 513.9 562.9 503.7 561.3 493.4 559.3 482.4 556.7 472.9 554.0 465.6 551.6 462.2 550.3 453.0 546.5 447.3 543.7 440.9 540.1 435.0 536.3 430.6 533.1 426.7 529.9 421.2 524.8 416.4 519.6 412.4 514.5 409.6 510.7 405.5 504.3 400.1 494.0 396.0 484.3 394.8 480.9 390.8 468.4 389.6 464.1 387.1 453.1 384.5 439.7 381.4 417.2 379.4 397.8 377.9 375.0 376.6 349.4 375.6 320.0 374.8 286.7 374.3 252.2 374.0 206.1 373.7 71.7 495.1 71.7Z"/>
<path fill="#ff7f4d" d="M494.2 71.7 494.3 184.3 494.8 247.0 495.3 272.6 495.9 293.1 496.7 309.7 497.7 326.4 499.0 340.5 501.0 355.8 503.3 368.6 505.7 378.9 508.4 387.8 509.8 391.7 512.0 396.8 514.4 401.9 516.5 405.5 519.1 409.6 520.9 412.1 524.2 416.2 526.8 418.9 530.4 422.4 534.4 425.7 538.3 428.3 542.1 430.7 545.7 432.6 551.1 435.1 556.2 437.2 561.4 439.0 566.5 440.5 574.2 442.4 587.0 444.9 602.4 447.1 617.7 448.6 638.2 449.9 658.7 450.8 684.4 451.5 715.1 451.9 751.0 452.2 875.3 452.3 875.3 572.3 786.9 572.2 725.4 571.9 678.0 571.4 637.0 570.6 601.1 569.5 570.3 568.0 547.3 566.4 524.2 563.9 509.7 561.9 503.7 560.8 493.4 558.8 484.5 556.7 478.1 555.0 467.2 551.6 462.7 549.9 454.4 546.5 447.3 543.0 442.2 540.2 436.0 536.3 430.6 532.3 426.8 529.1 421.7 524.3 417.3 519.6 413.2 514.5 410.1 510.4 406.3 504.4 400.8 494.0 398.5 488.9 394.8 479.3 390.9 466.8 389.6 462.0 387.6 453.1 385.6 442.8 384.5 436.8 381.9 417.2 379.8 396.8 378.1 371.2 376.9 345.6 376.0 318.7 375.2 282.9 374.7 247.0 374.4 201.0 374.0 71.7 494.2 71.7Z"/>
<path fill="#ff8a4d" d="M493.2 71.7 493.3 184.3 493.8 247.0 494.3 272.6 494.9 293.1 495.8 313.6 496.9 328.9 498.3 344.3 500.2 358.4 502.6 371.2 505.0 380.9 506.6 386.5 508.4 391.7 511.4 398.7 512.9 401.9 515.7 407.0 520.1 413.4 523.2 417.2 525.6 419.8 529.3 423.4 533.2 426.5 536.4 428.8 540.8 431.6 544.7 433.7 549.8 436.1 554.9 438.1 560.1 439.9 565.2 441.4 571.6 443.1 578.0 444.5 585.7 445.9 593.4 447.1 602.4 448.2 617.7 449.6 638.2 451.0 658.7 451.8 684.4 452.5 715.1 452.9 752.3 453.2 875.3 453.3 875.3 571.9 788.2 571.8 725.4 571.4 679.2 571.0 637.0 570.2 601.1 569.1 570.3 567.6 548.5 566.0 524.2 563.4 513.9 562.0 506.2 560.8 498.6 559.3 486.6 556.7 478.1 554.4 468.9 551.6 462.7 549.3 455.8 546.5 447.3 542.3 443.3 540.1 437.0 536.2 430.6 531.5 425.5 527.1 421.7 523.4 418.2 519.6 413.9 514.5 410.2 509.4 407.0 504.3 404.7 500.4 401.2 493.4 399.1 488.9 395.6 480.0 392.0 468.4 389.6 459.9 388.1 453.1 386.1 442.8 384.5 433.8 382.3 417.2 380.2 396.8 378.7 376.3 377.5 350.7 376.4 320.0 375.7 288.0 375.2 252.2 374.8 206.1 374.4 71.7 493.2 71.7Z"/>
<path fill="#ff954d" d="M492.3 71.7 492.4 184.3 492.8 247.0 493.3 272.6 493.9 293.1 494.8 313.6 495.8 328.9 497.4 345.6 499.3 359.7 501.4 371.2 503.8 381.4 505.3 386.5 507.0 391.7 509.0 396.8 510.7 400.6 514.1 407.0 516.5 410.9 519.1 414.5 521.3 417.2 524.8 421.1 528.9 424.9 532.1 427.5 535.7 430.0 539.8 432.6 544.7 435.2 549.8 437.5 554.9 439.5 560.1 441.2 565.2 442.7 571.6 444.3 578.0 445.7 585.7 447.1 601.1 449.1 617.7 450.7 637.0 451.9 658.7 452.8 684.4 453.5 715.1 453.9 751.0 454.1 875.3 454.2 875.3 571.5 788.2 571.3 725.4 571.0 674.1 570.5 633.1 569.7 597.2 568.5 566.3 567.0 544.7 565.2 524.2 563.0 515.9 561.9 508.0 560.6 498.6 558.8 488.3 556.6 478.1 553.9 470.7 551.6 467.0 550.3 457.2 546.5 447.3 541.7 444.5 540.1 437.0 535.4 431.9 531.7 426.8 527.4 424.0 524.8 420.2 520.9 415.3 515.2 411.0 509.4 407.7 504.3 405.0 499.7 402.1 494.0 399.9 489.2 396.0 479.5 394.8 475.8 392.5 468.4 389.6 457.7 387.6 448.0 385.7 437.7 384.5 430.6 383.4 422.4 382.2 412.1 380.7 396.8 379.4 380.1 377.9 350.7 376.8 320.0 376.1 288.0 375.6 252.2 375.2 206.1 374.9 71.7 492.3 71.7Z"/>
<path fill="#ffa04d" d="M491.3 71.7 491.4 184.3 491.8 247.0 492.3 272.6 492.9 293.1 493.8 313.6 494.8 330.2 496.3 345.6 498.3 360.9 500.4 372.5 503.2 384.0 506.1 392.9 507.6 396.8 509.8 401.9 512.5 407.0 513.9 409.5 515.6 412.1 519.1 416.9 524.2 422.6 529.3 427.2 531.9 429.1 535.0 431.3 539.6 434.1 544.7 436.7 549.8 439.0 554.9 440.9 560.1 442.6 565.2 444.0 571.6 445.6 578.0 446.9 585.7 448.2 602.4 450.4 617.7 451.8 638.2 453.0 658.7 453.8 684.4 454.4 715.1 454.9 751.0 455.1 875.3 455.2 875.3 571.1 788.2 570.9 725.4 570.6 674.1 570.1 633.1 569.3 601.1 568.3 573.2 567.0 549.8 565.2 534.4 563.7 524.2 562.5 519.1 561.9 508.8 560.2 498.6 558.3 488.3 556.1 472.4 551.6 467.8 550.0 457.6 546.0 451.1 542.9 445.8 540.1 439.5 536.3 432.3 531.2 424.9 524.8 420.4 520.2 415.5 514.5 411.8 509.4 409.2 505.6 405.4 499.2 402.8 494.0 399.9 487.7 396.4 478.7 394.8 474.1 393.1 468.4 389.6 455.4 388.1 448.0 385.8 435.5 384.5 427.4 383.2 417.2 381.1 396.8 379.4 373.5 378.3 350.7 377.2 320.0 376.5 288.0 376.0 252.2 375.6 204.8 375.3 71.7 491.3 71.7Z"/>
<path fill="#ffab4d" d="M490.4 71.7 490.4 185.6 490.9 252.2 491.4 277.7 492.0 298.2 492.8 314.9 493.9 331.5 495.2 345.6 497.1 360.9 498.4 368.6 499.7 375.0 502.3 385.3 503.8 390.4 505.6 395.5 508.8 403.0 510.9 407.0 513.1 410.8 517.5 417.2 520.8 421.1 524.2 424.6 527.4 427.5 530.7 430.0 534.4 432.7 539.6 435.7 544.7 438.2 549.5 440.3 554.9 442.3 560.1 443.9 565.2 445.3 571.6 446.8 578.0 448.1 585.7 449.4 601.1 451.4 617.7 452.8 637.0 454.0 658.7 454.8 684.4 455.4 715.1 455.8 751.0 456.1 875.3 456.2 875.3 570.7 788.2 570.5 725.4 570.2 674.1 569.7 633.1 568.9 601.1 567.9 575.4 566.7 549.8 564.8 534.4 563.2 524.2 562.1 513.9 560.6 503.7 558.8 493.4 556.7 488.3 555.5 472.9 551.2 462.7 547.5 457.6 545.3 447.0 540.1 440.6 536.3 433.4 531.2 425.8 524.8 420.8 519.6 416.4 514.5 410.1 505.8 405.0 497.0 401.2 489.1 399.9 486.2 397.0 478.7 394.8 472.2 392.2 463.3 389.6 453.1 386.7 437.7 384.3 422.4 383.1 412.1 381.6 396.8 380.0 376.3 378.8 354.5 377.8 323.8 377.0 289.3 376.4 252.2 376.1 206.1 375.7 71.7 490.4 71.7Z"/>
<path fill="#ffb64d" d="M489.4 71.7 489.5 184.3 489.9 247.0 490.3 272.6 490.9 294.4 491.7 313.6 492.7 330.2 494.0 345.6 496.0 360.9 497.9 372.5 500.6 384.0 503.3 392.9 504.7 396.8 506.8 401.9 509.3 407.0 511.4 410.8 515.7 417.2 519.1 421.4 522.4 424.9 525.1 427.5 529.3 430.9 533.2 433.5 537.0 435.9 540.8 437.9 546.0 440.3 551.1 442.3 556.2 444.1 561.4 445.6 569.0 447.5 581.9 450.0 597.2 452.1 612.6 453.5 633.1 454.9 653.6 455.7 679.2 456.3 710.0 456.8 747.2 457.0 875.3 457.1 875.3 570.3 788.2 570.1 725.4 569.8 674.1 569.3 633.1 568.5 601.1 567.5 575.4 566.2 549.8 564.3 526.4 561.9 508.8 559.2 498.6 557.3 490.4 555.5 478.1 552.2 472.9 550.6 462.7 546.8 458.9 545.2 451.1 541.6 447.3 539.5 441.8 536.3 434.5 531.2 431.9 529.1 426.8 524.7 421.7 519.6 416.5 513.6 413.4 509.4 410.1 504.6 405.0 495.7 399.9 484.6 396.0 474.2 394.8 470.3 392.8 463.3 390.2 453.1 387.2 437.7 384.5 420.2 382.1 396.8 380.7 379.1 379.3 355.8 378.2 325.1 377.5 293.1 376.9 257.3 376.5 209.9 376.1 71.7 489.4 71.7Z"/>
<path fill="#ffc24d" d="M488.4 71.7 488.5 189.4 488.9 252.2 489.4 277.7 490.0 298.2 490.9 318.7 491.9 334.1 493.5 350.7 495.4 364.8 497.5 376.3 500.0 386.5 501.5 391.7 503.2 396.8 506.5 404.5 508.3 408.3 510.5 412.1 513.0 416.0 515.2 419.1 517.9 422.4 521.6 426.3 524.3 428.8 529.2 432.6 534.4 436.0 537.4 437.7 540.8 439.5 545.5 441.6 549.8 443.3 554.9 445.0 560.6 446.7 567.8 448.5 580.6 450.9 588.3 452.1 597.2 453.2 612.6 454.6 633.1 455.9 653.6 456.7 679.2 457.3 710.0 457.7 747.2 458.0 875.3 458.1 875.3 569.9 788.2 569.7 725.4 569.4 678.0 568.9 637.0 568.2 601.1 567.1 576.7 565.8 551.1 563.9 529.3 561.7 519.1 560.3 508.8 558.6 498.6 556.8 492.8 555.5 478.1 551.6 467.8 548.1 460.5 545.2 452.2 541.4 447.3 538.7 442.2 535.7 435.6 531.2 429.3 526.0 425.5 522.5 420.4 517.1 415.3 510.8 410.1 503.3 404.9 494.0 399.9 483.0 396.5 473.6 394.8 468.3 390.8 453.1 389.6 448.0 387.7 437.7 386.1 427.5 384.6 417.2 382.5 396.8 380.7 372.1 379.5 349.4 378.6 323.8 377.9 293.1 377.3 257.3 376.9 209.9 376.5 71.7 488.4 71.7Z"/>
<path fill="#ffcd4d" d="M487.5 71.7 487.5 189.4 487.9 252.2 488.4 277.7 488.9 298.2 489.8 318.7 490.8 334.1 492.3 350.7 494.2 364.8 496.2 376.3 498.6 386.5 500.1 391.7 501.8 396.8 503.8 401.9 505.5 405.7 508.8 412.1 512.0 417.2 513.9 419.9 517.1 423.6 520.3 427.1 524.2 430.6 526.8 432.6 530.3 435.2 534.4 437.7 539.6 440.4 544.7 442.7 549.8 444.7 554.9 446.4 560.1 447.9 566.5 449.5 572.9 450.8 580.6 452.1 597.2 454.3 612.6 455.7 632.7 456.9 653.6 457.7 679.2 458.3 710.0 458.7 747.2 459.0 875.3 459.0 875.3 569.4 788.2 569.3 725.4 568.9 678.0 568.5 637.0 567.7 610.1 567.0 580.6 565.6 551.1 563.5 539.6 562.4 529.3 561.2 519.1 559.8 508.8 558.1 501.2 556.7 493.4 555.0 483.2 552.4 478.1 551.0 467.8 547.5 462.1 545.2 451.2 540.1 442.4 535.0 436.8 531.2 430.6 526.3 425.5 521.5 420.4 516.1 416.0 510.7 411.5 504.3 410.1 502.0 405.0 492.8 401.2 484.4 399.9 481.3 397.1 473.6 394.8 466.3 390.9 451.2 389.6 445.3 388.3 437.7 386.6 427.5 385.1 417.2 384.5 412.1 383.0 396.8 381.1 371.2 379.9 349.4 379.0 325.1 378.3 293.1 377.7 257.3 377.3 209.9 376.9 71.7 487.5 71.7Z"/>
<path fill="#ffd84d" d="M486.5 71.7 486.5 189.4 486.9 253.4 487.4 277.7 488.0 299.5 488.8 318.7 489.9 336.6 491.2 350.7 493.2 366.1 494.5 373.7 495.8 380.1 498.4 390.4 501.3 399.3 504.5 407.0 507.1 412.1 508.8 415.0 511.1 418.5 513.9 422.3 517.3 426.2 519.9 428.8 524.2 432.6 527.7 435.2 530.6 437.1 534.4 439.4 539.6 442.0 544.7 444.2 549.8 446.1 554.9 447.8 560.1 449.2 566.5 450.7 572.9 452.0 580.6 453.3 597.2 455.4 612.6 456.8 631.8 457.9 653.6 458.8 679.2 459.4 710.0 459.7 745.9 459.9 875.3 460.0 875.3 569.0 788.2 568.8 725.4 568.5 674.1 568.0 633.1 567.2 602.4 566.2 575.4 564.8 549.8 562.9 538.9 561.9 529.3 560.7 519.1 559.3 504.0 556.7 497.9 555.5 488.3 553.2 482.3 551.6 472.9 548.6 466.9 546.5 457.6 542.5 452.4 540.0 445.7 536.3 442.2 534.0 436.3 529.9 431.5 526.0 425.9 520.9 421.1 515.8 416.5 510.2 412.4 504.3 410.1 500.7 405.0 491.3 401.6 483.8 399.9 479.6 396.1 468.4 394.8 464.2 390.9 448.7 388.8 437.7 385.7 417.2 384.5 407.7 383.5 396.8 381.8 375.0 380.4 350.7 379.4 323.3 378.7 293.1 378.2 257.3 377.8 209.9 377.3 71.7 486.5 71.7Z"/>
<path fill="#ffe34d" d="M485.5 71.7 485.5 190.7 486.0 257.3 486.4 282.9 487.0 303.3 487.8 320.0 488.8 336.6 490.1 350.7 492.0 366.1 493.3 373.7 494.5 380.1 497.0 390.4 498.6 395.5 500.3 400.6 503.6 408.3 505.5 412.1 507.7 416.0 512.1 422.4 515.3 426.2 519.0 430.0 521.9 432.6 525.5 435.4 529.3 438.1 534.4 441.0 539.6 443.6 543.4 445.2 549.8 447.5 554.9 449.1 565.6 451.8 571.6 453.0 580.6 454.5 596.0 456.4 612.6 457.9 631.8 459.0 653.6 459.8 679.2 460.4 710.0 460.7 745.9 460.9 875.3 461.0 875.3 568.6 730.5 568.2 679.2 567.7 639.9 567.0 606.2 565.9 580.6 564.6 551.1 562.5 543.6 561.9 532.5 560.6 519.1 558.7 506.9 556.7 498.6 555.0 488.3 552.6 480.2 550.3 468.7 546.5 457.6 541.8 452.4 539.2 447.1 536.3 440.9 532.3 435.8 528.5 431.1 524.8 425.7 519.6 421.0 514.5 416.9 509.4 413.3 504.3 410.1 499.4 405.0 489.8 399.9 477.7 395.2 463.3 391.4 448.0 389.3 437.7 386.2 417.2 385.0 407.0 383.9 396.8 382.3 375.0 380.9 349.4 379.9 323.8 379.1 294.4 378.6 257.3 378.2 209.9 377.8 71.7 485.5 71.7Z"/>
<path fill="#ffee4d" d="M484.5 71.7 484.6 190.7 485.0 257.3 485.4 282.9 486.0 303.3 486.9 323.8 487.9 339.2 489.5 355.8 491.4 369.9 493.5 381.4 496.0 391.7 497.6 396.8 499.3 401.9 502.6 409.6 503.8 412.1 506.7 417.2 508.8 420.4 511.2 423.6 514.3 427.5 517.8 431.0 520.3 433.3 524.2 436.4 528.1 439.0 532.4 441.6 535.7 443.3 540.8 445.7 544.7 447.2 551.1 449.4 556.2 450.9 563.9 452.7 576.7 455.1 585.7 456.4 593.4 457.3 610.0 458.8 628.0 459.9 652.3 460.8 679.2 461.4 710.0 461.7 745.9 461.9 875.3 462.0 875.3 568.2 730.5 567.7 684.4 567.3 647.2 566.7 612.6 565.7 581.9 564.2 554.9 562.4 544.7 561.5 534.4 560.3 524.2 558.9 510.0 556.7 503.4 555.5 493.4 553.2 486.8 551.6 478.1 549.0 470.6 546.5 462.7 543.3 456.3 540.4 448.5 536.3 442.2 532.3 438.8 529.9 432.3 524.8 426.8 519.7 422.0 514.5 418.8 510.7 415.3 505.9 411.4 500.1 408.0 494.0 405.4 488.9 401.2 479.2 399.9 475.9 396.0 464.1 394.8 459.7 393.1 453.1 390.9 443.1 389.6 436.5 386.7 417.2 384.5 397.8 382.8 375.0 381.3 349.4 380.3 323.8 379.4 288.0 378.9 252.2 378.6 206.1 378.2 71.7 484.5 71.7Z"/>
<path fill="#fff94d" d="M483.6 71.7 483.6 190.7 484.0 257.3 484.4 282.9 484.9 303.3 485.8 323.8 486.8 339.2 488.3 355.8 490.2 369.9 492.2 381.4 494.7 391.7 496.1 396.8 497.9 401.9 499.9 407.0 501.6 410.8 505.0 417.2 508.3 422.4 510.2 424.9 513.4 428.8 516.5 431.9 519.1 434.2 523.5 437.7 527.3 440.3 530.6 442.3 534.4 444.3 539.6 446.7 544.7 448.7 549.8 450.4 554.9 451.9 561.4 453.5 567.8 454.8 575.4 456.2 583.1 457.3 592.1 458.3 607.5 459.7 626.7 460.9 648.5 461.7 674.1 462.3 704.9 462.7 742.0 462.9 875.3 463.0 875.3 567.8 788.2 567.6 725.4 567.3 684.4 566.9 643.4 566.1 611.3 565.1 580.6 563.7 554.3 561.9 534.4 559.7 513.2 556.7 503.7 554.9 493.4 552.6 484.6 550.3 472.9 546.7 462.7 542.6 457.3 540.1 450.0 536.3 447.3 534.7 440.0 529.9 435.0 526.0 429.2 520.9 424.2 515.8 419.8 510.7 415.3 504.6 411.7 499.2 409.5 495.3 406.2 488.9 403.8 483.8 399.9 474.0 396.5 463.3 394.8 457.3 392.6 448.0 389.6 433.3 386.6 412.1 384.5 392.3 382.9 369.9 381.6 344.3 380.6 318.7 379.8 282.9 379.4 252.2 379.0 204.8 378.6 71.7 483.6 71.7Z"/>
<path fill="#f9ff52" d="M482.6 71.7 482.6 190.7 483.0 257.3 483.4 282.9 483.9 304.6 484.7 323.8 485.8 340.5 487.2 355.8 488.9 369.9 490.9 381.4 493.4 392.2 496.4 401.9 498.3 407.0 500.6 412.1 503.2 417.2 504.8 419.8 506.4 422.4 509.2 426.2 512.5 430.0 515.0 432.6 519.1 436.3 522.6 439.0 529.3 443.3 534.4 445.9 539.6 448.2 544.7 450.1 549.8 451.8 554.9 453.2 561.4 454.8 567.8 456.1 575.4 457.4 592.1 459.5 607.5 460.8 628.0 462.0 648.5 462.8 675.4 463.4 704.9 463.7 742.0 463.9 875.3 463.9 875.3 567.4 735.6 566.9 684.4 566.4 645.2 565.7 611.3 564.7 580.6 563.2 560.1 561.8 546.6 560.6 534.4 559.2 524.2 557.8 513.9 556.3 503.7 554.3 491.7 551.6 483.2 549.2 474.5 546.5 461.7 541.4 452.4 536.8 449.3 535.0 442.2 530.5 437.0 526.7 431.9 522.4 429.0 519.6 425.2 515.8 420.4 510.2 415.9 504.3 412.6 499.2 410.1 495.0 406.3 487.5 404.6 483.8 400.9 474.8 397.2 463.3 394.3 453.1 392.1 442.8 390.1 432.6 387.8 417.2 385.3 395.5 383.8 376.3 382.3 349.4 381.2 320.0 380.4 288.0 379.8 247.0 379.4 203.0 379.0 71.7 482.6 71.7Z"/>
<path fill="#eeff5d" d="M481.6 71.7 481.6 194.6 481.9 257.3 482.3 282.9 482.8 303.3 483.6 323.8 484.6 340.5 486.0 355.8 487.9 371.2 489.9 382.7 492.6 394.2 495.4 403.2 496.8 407.0 499.0 412.1 501.5 417.2 503.7 420.9 508.2 427.5 511.4 431.1 513.9 433.8 518.4 437.7 521.8 440.3 525.5 442.8 529.3 445.0 534.4 447.6 539.6 449.7 544.7 451.6 549.8 453.2 554.9 454.6 561.4 456.1 567.8 457.3 575.4 458.6 590.8 460.5 607.5 461.9 626.7 463.0 648.5 463.8 674.1 464.4 704.9 464.7 742.0 464.9 875.3 464.9 875.3 566.9 792.0 566.7 730.5 566.4 679.2 565.9 642.1 565.1 602.4 563.8 571.6 562.2 551.1 560.5 529.3 558.0 520.3 556.7 512.8 555.5 503.7 553.7 493.4 551.4 488.3 550.0 476.6 546.5 472.9 545.2 462.7 541.1 457.6 538.6 450.8 535.0 442.7 529.9 437.5 526.0 430.1 519.6 425.5 515.0 420.7 509.4 416.9 504.3 414.4 500.4 410.5 494.0 407.8 488.9 405.0 483.1 401.2 473.6 399.9 469.9 397.9 463.3 394.8 452.2 392.7 442.8 390.7 432.6 389.6 426.3 388.4 417.2 385.8 394.6 384.3 376.3 382.8 349.4 381.6 318.7 380.8 284.1 380.2 247.0 379.8 201.0 379.4 71.7 481.6 71.7Z"/>
<path fill="#e3ff68" d="M480.6 71.7 480.6 195.8 480.9 262.4 481.4 288.0 481.9 308.5 482.8 328.9 483.8 344.3 485.2 359.7 487.1 373.7 489.4 386.5 491.9 396.8 493.4 401.9 495.2 407.0 498.6 414.7 500.5 418.5 502.7 422.4 507.3 428.8 510.6 432.6 513.9 436.0 517.5 439.0 520.3 441.2 524.2 443.8 529.3 446.7 534.4 449.2 538.3 450.8 544.7 453.1 548.9 454.4 554.9 456.0 560.1 457.1 566.5 458.4 575.4 459.8 590.8 461.7 607.5 463.1 626.7 464.1 648.5 464.9 674.1 465.4 740.8 465.9 875.3 465.9 875.3 566.4 788.2 566.2 725.4 565.9 679.2 565.4 638.2 564.5 602.4 563.3 574.3 561.9 551.1 559.9 529.3 557.5 524.0 556.7 513.9 555.1 503.7 553.1 493.4 550.7 478.1 546.3 467.8 542.4 462.7 540.2 452.3 535.0 446.0 531.2 438.9 526.0 437.0 524.6 431.3 519.6 426.2 514.5 421.7 509.3 415.3 500.4 411.4 494.0 408.7 488.9 406.2 483.8 404.0 478.7 400.1 468.4 398.5 463.3 394.8 449.5 390.9 430.3 389.6 422.5 388.3 412.1 386.1 391.7 384.5 372.4 383.1 345.6 382.0 314.9 381.3 282.9 380.7 242.6 380.3 201.0 379.9 71.7 480.6 71.7Z"/>
<path fill="#d8ff74" d="M479.6 71.7 479.5 195.8 479.9 262.4 480.3 288.0 480.8 308.5 481.7 328.9 482.7 344.3 484.2 360.9 485.8 373.7 488.1 386.5 490.5 396.8 492.0 401.9 493.7 407.0 495.7 412.1 497.5 416.0 501.1 422.7 503.7 426.6 506.3 430.0 508.8 433.1 512.7 437.0 515.2 439.2 519.1 442.2 524.2 445.6 528.0 447.7 533.2 450.2 537.0 451.8 542.1 453.7 548.4 455.6 554.9 457.3 560.1 458.5 566.5 459.7 575.4 461.1 589.5 462.7 607.5 464.2 626.7 465.2 648.5 466.0 674.1 466.5 740.8 466.9 875.3 466.9 875.3 566.0 786.9 565.8 726.7 565.4 679.2 564.9 638.2 564.0 607.5 563.0 580.6 561.7 565.2 560.6 554.9 559.7 539.6 558.1 529.3 556.9 519.1 555.3 508.8 553.5 499.8 551.6 494.6 550.3 483.2 547.2 478.1 545.5 467.8 541.7 464.2 540.1 456.3 536.3 452.4 534.1 447.3 531.0 440.2 526.0 437.0 523.5 431.9 519.0 426.8 513.9 421.7 507.9 415.4 499.2 410.1 490.2 405.0 479.4 401.2 469.3 399.2 463.3 396.3 453.1 394.8 446.7 391.0 427.5 389.6 418.4 388.8 412.1 386.6 391.7 384.9 369.9 383.8 349.4 382.6 318.7 381.8 284.1 381.2 247.0 380.8 201.0 380.4 71.7 479.6 71.7Z"/>
<path fill="#cdff7f" d="M478.6 71.7 478.5 195.8 478.9 262.4 479.2 288.0 479.8 309.7 480.6 328.9 481.6 345.6 483.0 360.9 484.7 375.0 486.7 386.5 489.4 398.1 492.2 407.0 494.1 412.1 496.4 417.2 498.6 421.4 500.7 424.9 502.4 427.6 505.2 431.3 508.5 435.2 511.4 438.0 515.2 441.3 519.0 444.1 523.0 446.7 526.8 448.8 530.6 450.7 535.7 452.9 539.6 454.4 546.0 456.4 552.4 458.1 560.1 459.8 572.9 462.0 588.3 463.8 604.9 465.2 622.9 466.2 645.9 467.0 672.8 467.5 740.8 467.9 875.3 467.9 875.3 565.5 792.0 565.3 730.5 565.0 683.1 564.4 642.1 563.7 607.5 562.6 581.9 561.3 570.3 560.5 554.9 559.2 532.4 556.7 523.7 555.5 513.9 553.8 503.7 551.8 497.3 550.3 483.2 546.5 472.9 542.8 466.1 540.1 458.0 536.3 455.6 535.0 447.3 530.0 441.6 526.0 435.3 520.9 430.6 516.6 425.5 511.2 421.7 506.5 416.4 499.2 413.3 494.0 410.1 488.5 405.0 477.4 401.7 468.4 399.9 463.2 397.1 453.1 394.8 443.8 391.7 427.5 389.6 414.1 387.2 391.7 385.5 371.2 384.3 350.7 383.1 320.0 382.3 288.0 381.8 252.2 381.3 204.8 380.9 71.7 478.6 71.7Z"/>
<path fill="#c2ff8a" d="M477.5 71.7 477.5 195.8 477.8 262.4 478.2 288.0 478.7 309.7 479.5 328.9 480.4 345.6 481.8 360.9 483.7 376.3 485.7 388.4 488.3 399.3 491.1 408.3 492.5 412.1 494.7 417.2 497.3 422.3 498.8 424.9 501.1 428.5 504.1 432.6 507.5 436.4 510.1 439.0 513.9 442.4 517.8 445.3 521.6 447.7 525.5 449.9 529.3 451.8 534.4 454.0 539.6 455.9 544.7 457.5 549.8 458.9 556.2 460.3 562.6 461.6 570.3 462.9 587.0 464.9 602.4 466.1 622.9 467.3 643.4 468.0 671.6 468.5 740.8 469.0 875.3 469.0 875.3 565.0 792.0 564.8 730.5 564.5 683.1 563.9 642.1 563.2 606.2 562.0 581.9 560.7 554.9 558.6 534.4 556.4 524.2 554.9 513.9 553.1 505.9 551.6 498.6 549.9 488.3 547.2 483.2 545.7 472.9 542.1 467.8 540.0 457.3 535.0 450.7 531.2 442.2 525.4 436.6 520.9 431.1 515.8 426.3 510.7 421.7 505.1 417.4 499.2 415.3 495.8 410.1 486.6 406.4 478.7 405.0 475.3 401.2 464.7 399.9 460.7 397.8 453.1 395.2 442.8 392.3 427.5 390.9 418.7 389.6 409.5 387.8 391.7 385.8 367.0 384.5 344.3 383.6 318.7 382.8 288.0 382.3 252.2 381.8 204.8 381.4 71.7 477.5 71.7Z"/>
<path fill="#b6ff95" d="M476.5 71.7 476.5 201.0 476.8 267.5 477.2 293.1 477.7 313.6 478.6 334.1 479.6 349.4 481.1 366.1 482.8 378.9 485.1 391.7 487.6 401.9 489.1 407.0 490.9 412.1 494.2 419.8 496.0 423.3 498.5 427.5 503.0 433.9 506.2 437.6 509.0 440.3 512.7 443.5 516.5 446.3 519.1 448.1 524.2 451.0 529.3 453.5 534.4 455.6 539.6 457.4 544.7 458.9 549.8 460.3 556.2 461.7 570.3 464.1 585.7 466.0 602.4 467.3 621.6 468.3 643.4 469.1 669.0 469.6 735.6 470.0 875.3 470.0 875.3 564.5 792.0 564.3 730.5 564.0 684.4 563.5 643.4 562.7 615.2 561.9 588.7 560.6 561.4 558.6 539.6 556.4 529.3 555.0 519.1 553.4 509.1 551.6 503.3 550.3 488.3 546.5 478.1 543.1 470.2 540.1 461.7 536.3 457.6 534.1 452.3 531.2 444.6 526.0 442.2 524.2 436.5 519.6 431.1 514.5 425.5 508.4 421.7 503.6 418.5 499.2 415.3 494.2 411.4 487.3 409.7 483.8 405.1 473.6 401.2 462.3 399.9 458.2 398.5 453.1 396.0 443.3 394.8 437.4 393.0 427.5 390.9 414.3 389.6 404.5 388.8 396.8 386.9 375.0 385.4 350.7 384.4 328.9 383.4 293.1 382.8 252.2 382.3 206.1 381.9 71.7 476.5 71.7Z"/>
<path fill="#abffa0" d="M475.5 71.7 475.4 201.0 475.7 267.5 476.1 293.1 476.7 314.9 477.4 334.1 478.5 350.7 479.8 366.1 481.6 380.1 483.7 391.7 486.1 401.9 487.6 407.0 489.3 412.1 491.3 417.2 493.1 421.1 495.1 424.9 497.3 428.7 499.8 432.5 501.9 435.2 505.0 438.7 508.8 442.4 512.4 445.4 515.2 447.5 519.1 450.0 524.2 452.8 529.3 455.2 533.2 456.7 539.6 458.9 544.7 460.4 554.9 462.8 561.4 464.0 570.3 465.4 585.7 467.2 602.4 468.5 621.6 469.5 643.4 470.2 669.0 470.6 735.6 471.1 875.3 471.0 875.3 564.0 792.0 563.8 730.5 563.4 684.4 563.0 643.4 562.2 612.6 561.2 587.0 559.9 560.1 557.9 547.4 556.7 539.6 555.8 519.1 552.8 512.6 551.6 503.7 549.7 493.4 547.2 488.3 545.7 478.1 542.3 472.2 540.1 463.6 536.3 461.0 535.0 452.4 530.2 446.1 526.0 439.5 520.9 435.8 517.7 431.9 514.0 425.5 507.0 420.4 500.3 416.5 494.5 411.2 485.1 406.0 473.6 404.1 468.4 401.2 459.8 399.9 455.6 397.9 448.0 394.8 433.9 391.3 412.1 389.4 396.8 387.2 371.2 385.8 347.5 384.6 318.7 383.9 293.1 383.3 252.2 382.9 206.1 382.4 71.7 475.5 71.7Z"/>
<path fill="#a0ffab" d="M474.4 71.7 474.4 201.0 474.7 267.5 475.0 293.1 475.5 314.9 476.3 334.1 477.3 350.7 478.6 366.1 480.5 381.4 482.5 392.9 484.0 399.3 485.3 404.5 488.2 413.4 489.6 417.2 491.9 422.4 494.6 427.5 496.2 430.0 498.6 433.6 501.1 436.9 503.7 439.8 506.7 442.8 510.1 445.7 513.9 448.7 518.9 451.8 522.9 454.0 528.0 456.3 531.9 457.9 536.4 459.5 542.1 461.2 548.5 462.8 554.9 464.2 561.4 465.4 569.0 466.5 584.4 468.3 601.1 469.6 620.3 470.5 643.4 471.3 669.0 471.7 735.6 472.1 875.3 472.1 875.3 563.5 735.6 563.0 689.5 562.5 650.4 561.9 612.6 560.6 587.0 559.3 560.1 557.4 553.2 556.7 540.8 555.3 529.3 553.7 516.3 551.6 508.8 550.1 498.6 547.7 489.3 545.2 478.1 541.5 467.8 537.3 463.0 535.0 455.8 531.2 452.4 529.1 446.0 524.8 440.9 520.9 435.1 515.8 430.6 511.3 425.5 505.5 420.7 499.2 417.3 494.0 415.3 490.6 411.4 483.5 409.2 478.7 405.0 468.7 401.5 458.2 399.9 452.8 398.7 448.0 396.3 437.7 394.8 430.3 391.9 412.1 389.6 393.4 387.8 371.2 386.3 345.6 385.2 320.0 384.4 293.1 383.8 252.2 383.4 206.1 382.9 71.7 474.4 71.7Z"/>
<path fill="#95ffb6" d="M473.4 71.7 473.3 206.1 473.6 272.6 474.0 298.2 474.5 318.7 475.2 335.3 476.2 352.0 477.3 366.1 479.2 381.4 481.4 394.2 482.8 400.6 484.1 405.7 486.1 412.1 487.5 416.0 490.7 423.6 492.7 427.5 495.0 431.3 497.3 434.7 499.6 437.7 503.0 441.6 505.6 444.1 508.8 446.9 512.7 449.8 516.5 452.3 520.1 454.4 524.2 456.4 529.3 458.6 534.4 460.4 539.6 462.0 544.7 463.4 551.1 464.9 557.5 466.1 565.2 467.3 581.9 469.3 597.2 470.5 616.5 471.5 638.2 472.3 663.9 472.7 730.5 473.1 875.3 473.1 875.3 563.0 792.0 562.8 730.5 562.4 679.2 561.9 648.5 561.3 616.5 560.2 585.7 558.6 559.6 556.7 539.6 554.5 519.1 551.4 508.8 549.4 496.6 546.5 492.1 545.2 480.2 541.4 467.8 536.3 462.7 533.8 455.5 529.9 447.6 524.8 442.5 520.9 435.2 514.5 430.6 509.9 425.8 504.3 421.7 498.8 418.5 494.0 415.3 488.9 411.4 481.5 410.1 478.7 405.8 468.4 401.2 454.4 399.9 449.9 398.2 442.8 396.0 433.1 394.8 426.4 391.9 407.0 389.6 387.0 388.0 364.8 386.6 339.2 385.6 313.6 384.7 277.7 384.2 241.9 383.8 199.7 383.4 71.7 473.4 71.7Z"/>
<path fill="#8affc2" d="M472.3 71.7 472.3 206.1 472.6 272.6 472.9 298.2 473.4 320.0 474.2 339.2 475.1 354.5 476.6 371.2 478.4 385.3 480.5 396.8 482.9 407.0 484.5 412.1 486.2 417.2 489.6 425.0 491.5 428.8 493.8 432.6 496.4 436.4 498.6 439.3 501.7 442.8 505.0 446.0 508.8 449.2 512.5 451.8 516.5 454.3 520.3 456.4 524.2 458.2 529.3 460.3 534.4 462.0 539.6 463.6 544.7 464.9 551.1 466.3 557.5 467.5 565.2 468.6 581.9 470.5 597.2 471.7 616.5 472.7 638.2 473.4 663.9 473.8 730.5 474.2 875.3 474.1 875.3 562.5 788.2 562.3 726.7 561.9 684.4 561.4 648.5 560.7 612.6 559.5 581.9 557.8 560.1 556.1 539.6 553.8 524.2 551.6 519.1 550.7 508.8 548.6 499.7 546.5 493.4 544.8 482.7 541.4 478.1 539.7 469.9 536.3 462.7 532.7 457.6 530.0 451.2 526.0 446.0 522.3 442.2 519.3 436.7 514.5 431.6 509.4 426.8 503.9 420.4 495.2 416.4 488.9 413.7 483.8 410.1 476.6 406.7 468.4 405.0 463.8 403.2 458.2 399.9 446.8 397.8 437.7 395.7 427.5 394.8 422.3 393.3 412.1 390.6 390.4 389.0 371.2 387.4 344.3 386.2 313.6 385.3 282.9 384.7 247.0 384.4 206.1 383.9 71.7 472.3 71.7Z"/>
<path fill="#7fffcd" d="M471.3 71.7 471.2 209.9 471.4 272.6 471.8 298.2 472.3 320.0 473.0 339.2 474.0 355.8 475.3 371.2 477.0 385.3 479.0 396.8 481.4 407.0 482.8 412.1 484.5 417.2 486.5 422.4 488.3 426.2 492.2 433.3 494.7 437.2 497.3 440.5 499.8 443.4 503.7 447.2 507.5 450.4 510.1 452.3 513.9 454.8 519.1 457.6 524.2 460.0 528.0 461.5 534.4 463.7 539.6 465.1 549.8 467.5 557.5 468.9 565.2 470.0 580.6 471.7 597.2 472.9 616.5 473.9 638.2 474.5 663.9 474.9 730.5 475.3 875.3 475.2 875.3 562.0 793.3 561.8 730.5 561.4 679.2 560.8 643.4 559.9 607.5 558.6 575.4 556.8 554.9 554.9 534.4 552.4 528.6 551.6 519.1 549.9 503.7 546.7 498.6 545.4 488.3 542.3 483.2 540.6 472.9 536.6 469.3 535.0 461.7 531.2 457.6 528.8 452.4 525.6 445.9 520.9 439.7 515.8 435.8 512.1 431.9 508.2 426.8 502.2 420.8 494.0 416.5 487.1 414.7 483.8 409.8 473.6 406.3 464.8 404.1 458.2 401.2 448.5 399.9 443.6 396.0 425.3 394.8 417.9 393.3 407.0 390.9 386.5 389.5 369.9 387.8 340.5 386.6 309.7 385.8 277.7 385.3 241.9 384.8 195.8 384.4 71.7 471.3 71.7Z"/>
<path fill="#74ffd8" d="M470.2 71.7 470.1 211.2 470.3 273.9 470.6 298.2 471.1 320.0 471.8 339.2 472.7 355.8 474.0 371.2 475.8 386.5 477.8 398.1 479.2 404.5 480.5 409.6 483.3 418.5 484.7 422.4 487.0 427.5 489.6 432.5 491.2 435.2 493.4 438.5 496.0 441.8 498.6 444.8 501.8 448.0 505.0 450.7 508.8 453.6 512.7 456.1 516.5 458.2 520.3 460.1 525.5 462.3 530.6 464.1 536.5 465.9 543.4 467.6 549.8 469.0 562.6 471.0 578.0 472.7 596.0 474.1 612.6 474.9 634.4 475.6 662.6 476.1 730.5 476.4 875.3 476.3 875.3 561.4 793.3 561.2 731.8 560.8 689.5 560.3 648.5 559.5 612.6 558.3 583.4 556.7 561.4 554.9 539.6 552.5 533.4 551.6 524.2 550.1 513.9 548.1 503.7 545.9 488.0 541.4 483.2 539.7 472.9 535.6 461.4 529.9 453.1 524.8 447.3 520.7 441.3 515.8 437.0 511.8 434.6 509.4 429.9 504.3 425.8 499.2 422.1 494.0 419.6 490.2 415.9 483.8 411.4 474.9 410.1 472.0 406.7 463.3 405.0 458.5 401.9 448.0 399.9 440.2 396.3 422.4 394.8 413.2 393.9 407.0 391.6 386.5 389.7 364.8 388.6 344.3 387.4 313.6 386.4 279.0 385.8 241.9 385.5 201.0 385.0 71.7 470.2 71.7Z"/>
<path fill="#68ffe3" d="M469.1 71.7 469.0 215.0 469.2 277.7 469.6 303.3 470.1 325.1 470.8 344.3 471.7 359.7 473.2 376.3 475.0 390.4 477.1 401.9 479.6 412.1 482.5 421.1 485.7 428.9 487.6 432.6 489.9 436.4 492.2 439.9 494.7 443.2 497.8 446.7 500.4 449.2 503.7 452.1 507.5 455.0 511.4 457.4 515.1 459.5 519.1 461.4 524.2 463.6 529.3 465.4 534.4 466.9 539.6 468.3 547.3 469.9 560.1 472.1 576.7 473.9 592.1 475.1 611.3 476.1 633.1 476.7 658.7 477.2 725.4 477.5 875.3 477.4 875.3 560.8 792.0 560.6 735.6 560.3 689.5 559.7 648.5 558.9 617.7 557.9 590.8 556.6 575.4 555.5 565.2 554.6 539.6 551.8 530.1 550.3 519.1 548.3 509.9 546.5 504.6 545.2 493.4 542.1 488.3 540.5 478.1 536.7 474.0 535.0 466.0 531.2 462.7 529.3 457.0 526.0 449.5 520.9 447.3 519.2 441.6 514.5 436.2 509.4 431.4 504.3 426.8 498.7 423.5 494.0 420.4 489.4 416.5 482.9 414.4 478.7 410.1 469.5 405.9 458.2 404.3 453.1 401.2 441.9 399.9 436.6 398.1 427.5 396.2 417.2 394.8 408.1 392.8 391.7 390.9 371.5 389.5 350.7 388.2 320.0 387.3 288.0 386.6 252.2 386.1 204.8 385.8 149.8 385.6 71.7 469.1 71.7Z"/>
<path fill="#5dffee" d="M468.0 71.7 467.9 216.3 468.1 279.0 468.4 303.3 468.9 325.1 469.6 344.3 470.5 360.9 471.8 376.3 473.5 390.4 475.5 401.9 477.9 412.1 479.4 417.2 481.1 422.4 484.5 430.4 486.3 433.9 488.5 437.7 491.1 441.6 493.4 444.6 496.4 448.0 499.8 451.3 503.5 454.4 507.1 456.9 510.1 458.8 513.9 460.9 519.1 463.3 524.2 465.4 529.3 467.1 534.4 468.6 539.6 469.9 546.0 471.2 552.4 472.4 560.1 473.5 575.4 475.2 592.1 476.4 611.3 477.3 633.1 477.9 658.7 478.3 725.4 478.6 875.3 478.4 875.3 560.2 793.3 560.0 735.6 559.6 689.5 559.1 648.5 558.3 612.6 557.1 590.8 555.9 566.5 554.0 544.0 551.6 535.0 550.3 524.2 548.5 513.9 546.6 508.2 545.2 493.4 541.2 483.2 537.6 476.6 535.0 468.3 531.2 465.9 529.9 457.6 525.0 451.5 520.9 444.9 515.8 440.9 512.2 437.0 508.6 430.6 501.5 425.5 495.0 421.7 489.4 416.5 480.6 415.3 478.2 410.8 468.4 406.3 456.4 405.0 452.5 402.3 442.8 399.8 432.6 396.0 411.5 394.8 402.6 393.5 391.7 391.2 366.1 389.8 344.3 388.7 318.7 387.9 288.0 387.2 252.2 386.7 204.8 386.2 71.7 468.0 71.7Z"/>
<path fill="#52fff9" d="M466.9 71.7 466.8 221.4 467.0 282.9 467.3 308.5 467.8 328.9 468.4 345.6 469.3 362.2 470.4 376.3 472.3 391.7 474.5 404.5 476.9 414.7 479.7 423.6 481.2 427.5 483.5 432.6 485.7 436.8 487.8 440.3 489.6 442.8 492.6 446.7 494.9 449.2 498.6 452.8 502.0 455.6 505.6 458.2 508.8 460.3 513.9 463.0 519.1 465.3 522.9 466.8 529.3 468.9 534.4 470.3 544.7 472.5 552.4 473.8 560.1 474.9 575.4 476.5 592.1 477.7 611.3 478.5 633.1 479.1 658.7 479.5 725.4 479.7 875.3 479.6 875.3 559.6 793.3 559.4 735.6 559.0 689.5 558.5 648.5 557.7 619.6 556.7 594.8 555.5 566.5 553.3 551.1 551.8 544.7 550.9 534.4 549.4 524.2 547.7 517.8 546.5 508.8 544.4 498.6 541.8 493.4 540.2 482.3 536.3 478.1 534.5 470.8 531.2 462.7 526.8 459.3 524.8 451.7 519.6 446.8 515.8 440.9 510.6 435.8 505.5 430.6 499.7 426.3 494.0 422.8 488.9 420.4 485.1 416.5 478.2 411.9 468.4 410.1 464.2 406.3 453.4 405.0 449.3 403.3 442.8 401.2 434.5 399.9 428.7 396.2 407.0 394.2 391.7 392.2 369.9 390.6 345.6 389.5 323.8 388.5 288.0 387.8 252.2 387.3 204.8 386.8 71.7 466.9 71.7Z"/>
<path fill="#4df9ff" d="M465.8 71.7 465.6 221.4 465.8 282.9 466.1 308.5 466.6 330.2 467.3 349.4 468.1 364.8 469.5 381.4 471.1 394.2 473.4 407.0 475.9 417.2 478.8 426.2 482.0 433.9 484.0 437.7 486.3 441.6 488.3 444.5 491.0 448.0 494.5 451.8 497.2 454.4 500.3 456.9 503.7 459.3 507.5 461.7 511.4 463.8 515.2 465.6 520.3 467.7 525.5 469.5 530.6 471.0 535.8 472.3 543.4 473.8 556.2 475.9 571.6 477.6 587.0 478.7 606.2 479.6 628.0 480.2 653.6 480.6 720.3 480.9 875.3 480.7 875.3 559.0 793.3 558.8 735.6 558.4 689.5 557.9 648.5 557.1 617.7 556.0 592.1 554.6 565.2 552.5 556.5 551.6 546.2 550.3 534.4 548.6 522.2 546.5 513.9 544.7 503.7 542.2 496.4 540.1 485.3 536.3 473.3 531.2 467.8 528.3 461.6 524.8 455.7 520.9 448.9 515.8 447.2 514.5 441.5 509.4 436.4 504.3 431.9 499.2 426.8 492.6 424.3 488.9 421.0 483.8 416.5 475.7 415.3 473.2 410.9 463.3 407.3 453.1 405.6 448.0 404.2 442.8 401.7 432.6 399.9 424.4 397.0 407.0 394.8 390.1 392.6 366.1 391.0 340.5 389.8 313.6 389.1 288.0 388.4 252.2 387.9 204.8 387.4 71.7 465.8 71.7Z"/>
<path fill="#4deeff" d="M464.7 71.7 464.5 226.6 464.6 288.0 464.9 313.6 465.4 334.1 466.0 350.7 466.9 366.1 468.1 381.4 469.8 395.5 471.7 407.0 474.1 417.2 475.6 422.4 477.3 427.5 480.6 435.4 482.5 439.0 484.7 442.8 487.0 446.2 489.6 449.5 492.9 453.1 495.6 455.6 498.6 458.2 502.4 460.9 506.2 463.3 510.1 465.4 513.9 467.2 519.1 469.2 524.2 470.9 529.3 472.4 535.7 473.9 542.1 475.2 554.9 477.2 571.6 478.9 587.0 480.0 606.2 480.9 628.0 481.4 653.6 481.8 715.1 482.0 875.3 481.8 875.3 558.4 742.0 557.8 694.6 557.3 658.7 556.7 622.9 555.5 597.2 554.2 580.6 553.0 566.5 551.9 549.8 550.0 526.8 546.5 519.1 544.9 504.2 541.4 498.6 539.7 488.3 536.3 478.1 532.0 473.4 529.9 466.2 526.0 456.1 519.6 449.4 514.5 443.5 509.4 438.3 504.3 433.7 499.2 430.6 495.5 426.7 490.2 420.4 480.3 416.5 473.1 414.4 468.4 410.1 458.2 408.4 453.1 405.0 442.3 402.6 432.6 400.4 422.4 398.6 412.1 397.1 401.9 396.0 394.1 394.8 382.8 393.0 360.9 391.4 335.3 390.5 313.6 389.6 284.1 389.0 247.0 388.5 201.0 388.0 71.7 464.7 71.7Z"/>
<path fill="#4de3ff" d="M463.5 71.7 463.3 226.6 463.4 288.0 463.7 313.6 464.1 334.1 464.7 350.7 465.6 367.3 466.9 384.0 468.6 398.1 470.8 410.8 473.3 421.1 474.9 426.2 476.2 430.0 479.5 437.7 481.6 441.6 483.9 445.4 485.7 448.1 488.3 451.3 490.9 454.1 493.8 456.9 497.3 459.9 501.1 462.6 505.0 464.9 508.8 467.0 513.9 469.3 519.1 471.2 524.2 472.8 529.3 474.2 534.4 475.4 540.8 476.7 554.9 478.7 570.3 480.3 585.7 481.3 604.9 482.1 626.7 482.7 652.3 483.0 715.1 483.2 875.3 483.0 875.3 557.7 793.3 557.5 735.6 557.2 695.9 556.7 657.5 556.0 622.9 554.8 592.1 553.1 571.6 551.6 559.5 550.3 549.8 549.1 539.6 547.7 529.3 546.1 519.1 543.9 508.1 541.4 503.5 540.1 491.5 536.3 488.1 535.0 478.9 531.2 472.9 528.2 466.6 524.8 458.6 519.6 453.3 515.8 445.6 509.4 440.9 504.9 435.5 499.2 431.3 494.0 426.8 487.9 421.0 478.7 415.3 467.6 411.4 458.4 410.1 455.0 406.3 443.0 405.0 438.4 401.2 421.5 399.9 414.7 398.7 407.0 396.0 386.5 394.8 374.6 394.1 366.1 392.4 339.2 391.0 308.5 390.2 279.0 389.6 247.0 389.1 201.0 388.6 71.7 463.5 71.7Z"/>
<path fill="#4dd8ff" d="M462.4 71.7 462.1 231.7 462.3 293.1 462.5 318.7 463.0 339.2 463.6 355.8 464.4 371.2 465.6 386.5 467.4 400.6 469.3 412.1 471.8 422.4 473.3 427.5 475.1 432.6 476.8 436.7 478.5 440.3 479.8 442.8 482.1 446.7 484.5 450.0 486.9 453.1 489.6 456.0 493.3 459.5 496.5 462.0 499.8 464.4 503.7 466.7 507.5 468.6 511.4 470.4 516.3 472.3 521.6 474.0 526.8 475.4 531.9 476.6 538.3 477.9 551.1 479.8 567.8 481.5 581.9 482.5 601.1 483.3 622.9 483.8 648.5 484.2 710.0 484.4 875.3 484.1 875.3 557.1 745.9 556.6 699.7 556.1 658.7 555.3 622.9 554.0 590.8 552.3 581.2 551.6 570.3 550.6 549.8 548.3 537.3 546.5 530.0 545.2 512.2 541.4 507.4 540.1 495.0 536.3 482.0 531.2 478.1 529.3 469.3 524.8 462.7 520.7 456.3 516.2 452.4 513.2 447.3 508.9 442.2 504.0 437.0 498.6 431.9 492.4 429.3 488.9 425.7 483.8 421.7 477.1 417.1 468.4 415.3 464.5 410.1 451.5 406.3 439.1 405.0 434.3 401.3 417.2 399.9 409.3 398.8 401.9 396.3 381.4 394.8 365.4 393.1 339.2 391.8 309.7 390.9 277.7 390.2 241.9 389.7 194.6 389.3 71.7 462.4 71.7Z"/>
<path fill="#4dcdff" d="M461.2 71.7 460.9 236.8 461.0 294.4 461.2 318.7 461.7 340.5 462.3 359.7 463.2 375.0 464.5 390.4 465.9 401.9 468.1 414.7 470.5 424.9 473.4 433.9 474.9 437.7 476.8 441.7 478.7 445.4 481.1 449.2 483.2 452.2 485.7 455.3 488.3 458.1 491.2 460.8 494.7 463.6 498.6 466.2 502.4 468.5 506.2 470.4 510.1 472.1 515.2 474.0 524.2 476.7 529.3 477.9 537.0 479.4 549.8 481.3 565.2 482.8 581.9 483.9 601.1 484.7 622.9 485.2 647.2 485.5 704.9 485.6 875.3 485.3 875.3 556.5 797.1 556.2 735.6 555.8 689.5 555.2 652.3 554.3 621.6 553.2 591.8 551.6 570.3 549.8 554.9 548.0 543.2 546.5 535.4 545.2 524.2 543.0 516.6 541.4 511.6 540.1 498.6 536.3 488.3 532.4 482.3 529.9 472.2 524.8 463.8 519.6 457.6 515.2 451.8 510.7 446.1 505.6 440.9 500.3 435.8 494.6 431.2 488.9 426.8 482.6 421.3 473.6 416.5 464.2 415.3 461.3 410.1 448.0 405.7 432.6 402.4 417.2 399.9 403.4 397.2 381.4 395.2 360.9 393.9 340.5 392.6 309.7 391.6 277.7 390.9 241.9 390.5 199.7 389.9 71.7 461.2 71.7Z"/>
<path fill="#4dc2ff" d="M460.0 71.7 459.6 241.9 459.7 298.2 460.0 323.8 460.4 344.3 460.9 360.9 461.7 375.0 463.0 391.7 464.7 405.7 466.7 417.2 469.1 427.3 470.7 432.6 472.1 436.4 475.4 444.1 477.5 448.0 479.3 450.9 481.8 454.4 483.9 456.9 487.0 460.3 489.6 462.6 492.2 464.7 496.0 467.4 499.8 469.7 503.7 471.7 508.8 473.9 513.9 475.8 519.1 477.4 524.2 478.7 535.7 481.0 549.8 483.0 565.2 484.4 580.6 485.3 597.2 486.0 617.7 486.4 643.4 486.7 699.7 486.8 875.3 486.5 875.3 555.7 793.3 555.5 740.8 555.1 694.6 554.5 653.6 553.6 621.6 552.5 597.2 551.2 575.4 549.4 549.6 546.5 534.4 544.0 521.3 541.4 516.1 540.1 503.7 536.6 498.7 535.0 488.6 531.2 485.7 529.9 477.7 526.0 468.8 520.9 459.4 514.5 453.0 509.4 447.3 504.3 442.1 499.2 437.0 493.5 431.9 487.0 426.8 479.7 421.7 471.1 420.2 468.4 415.4 458.2 411.4 447.8 409.8 442.8 406.9 432.6 404.4 422.4 402.4 412.1 400.6 401.9 399.9 396.8 398.1 381.4 396.0 360.5 394.8 342.3 393.5 313.6 392.4 277.7 391.7 241.9 391.2 195.8 390.6 71.7 460.0 71.7Z"/>
<path fill="#4db6ff" d="M458.7 71.7 458.4 247.0 458.4 299.5 459.0 344.3 459.5 360.9 460.2 376.3 461.3 391.7 463.1 407.0 464.7 417.2 467.0 427.5 468.4 432.6 470.1 437.7 473.4 445.4 475.4 449.2 476.9 451.8 479.3 455.4 481.9 458.6 484.5 461.4 487.9 464.6 491.1 467.2 494.7 469.6 497.3 471.1 501.1 473.1 506.2 475.4 510.1 476.8 513.9 478.1 520.3 479.8 525.5 481.0 531.9 482.2 546.0 484.2 561.4 485.7 575.4 486.6 592.1 487.2 612.6 487.7 638.2 488.0 694.6 488.1 875.3 487.7 875.3 555.0 798.4 554.8 740.8 554.4 694.6 553.8 653.6 552.8 619.6 551.6 597.9 550.3 570.3 548.0 556.9 546.5 549.8 545.5 539.6 543.8 526.4 541.4 520.9 540.1 508.8 536.9 502.7 535.0 492.3 531.2 481.2 526.0 478.1 524.4 469.9 519.6 462.7 514.7 457.4 510.7 451.5 505.6 446.1 500.4 441.2 495.3 437.0 490.6 431.9 484.1 428.2 478.7 425.5 474.5 421.7 467.8 416.5 457.2 415.3 454.2 411.4 443.8 410.1 439.8 408.1 432.6 406.3 425.7 405.0 420.2 401.2 398.8 399.9 389.7 399.0 381.4 396.6 355.8 395.2 335.3 394.2 313.6 393.3 282.9 392.5 247.0 392.0 201.0 391.6 144.6 391.4 71.7 458.7 71.7Z"/>
<path fill="#4dabff" d="M457.5 71.7 457.1 252.2 457.1 303.3 457.3 328.9 457.7 349.4 458.2 366.1 458.9 381.4 460.1 396.8 461.5 409.6 463.7 422.4 465.7 431.3 468.5 440.3 470.0 444.1 471.6 447.7 473.8 451.8 475.5 454.6 477.1 456.9 480.1 460.8 482.4 463.3 485.7 466.4 489.6 469.4 492.2 471.2 496.0 473.4 499.8 475.3 503.7 477.0 508.8 478.8 513.9 480.4 519.1 481.7 524.2 482.8 530.6 484.0 544.7 485.9 560.1 487.2 575.4 488.1 592.1 488.7 612.6 489.1 638.2 489.3 689.5 489.4 875.3 488.9 875.3 554.2 798.4 554.0 740.8 553.6 694.6 553.0 653.6 552.1 626.7 551.1 601.1 549.6 575.4 547.6 564.9 546.5 554.9 545.2 531.9 541.4 524.2 539.7 511.2 536.3 507.1 535.0 496.3 531.2 493.1 529.9 484.8 526.0 482.3 524.8 473.3 519.6 467.5 515.8 460.7 510.7 452.4 503.6 447.3 498.7 442.2 493.3 437.0 487.4 431.9 480.7 426.8 473.2 421.2 463.3 416.5 453.4 415.3 450.2 411.4 439.4 410.1 435.3 406.3 420.5 405.0 414.6 402.8 401.9 401.2 391.6 399.9 381.8 397.8 359.7 396.0 334.7 394.8 307.9 394.0 282.9 393.3 247.0 392.8 201.0 392.4 144.6 392.2 71.7 457.5 71.7Z"/>
<path fill="#4da0ff" d="M456.3 71.7 455.7 308.5 456.2 350.7 456.6 366.1 457.3 381.4 458.4 398.1 459.9 412.1 461.7 423.6 464.0 433.8 465.2 438.4 466.7 442.8 469.9 450.5 472.0 454.4 474.2 458.0 476.2 460.8 478.3 463.3 480.6 465.9 484.5 469.3 486.6 471.0 489.6 473.0 493.4 475.3 497.3 477.2 502.4 479.3 506.2 480.6 510.1 481.8 515.2 483.1 521.6 484.5 528.0 485.6 539.6 487.2 554.9 488.6 570.3 489.5 587.0 490.1 607.5 490.5 631.8 490.7 679.2 490.7 875.3 490.2 875.3 553.4 802.3 553.2 745.9 552.9 699.7 552.3 663.9 551.6 629.4 550.3 601.1 548.7 573.9 546.5 563.0 545.2 554.9 544.1 539.6 541.7 534.4 540.7 516.0 536.3 511.8 535.0 500.6 531.2 497.3 529.9 488.3 525.8 477.0 519.6 469.4 514.5 462.7 509.5 457.6 505.1 452.4 500.4 446.0 494.0 441.3 488.9 437.0 483.8 431.9 477.1 426.2 468.4 420.6 458.2 416.5 449.2 415.3 446.0 411.4 434.8 410.1 430.5 406.3 414.8 405.0 408.6 403.1 396.8 401.2 383.6 400.3 376.3 398.4 355.8 396.7 330.2 395.7 308.5 394.8 281.7 394.0 241.9 393.5 199.7 393.2 143.4 392.9 71.7 456.3 71.7Z"/>
<path fill="#4d95ff" d="M454.9 71.7 454.3 313.6 454.7 355.8 455.1 371.2 455.8 386.5 456.8 401.9 458.3 416.0 460.1 427.5 462.0 436.4 463.4 441.6 465.1 446.7 466.6 450.5 468.4 454.4 469.7 456.9 471.6 460.1 474.2 463.7 476.0 465.9 479.3 469.4 481.2 471.0 487.0 475.3 490.8 477.4 494.7 479.3 498.6 480.9 503.2 482.5 513.9 485.4 524.2 487.3 530.6 488.2 539.6 489.2 554.9 490.4 570.3 491.2 585.7 491.6 606.2 492.0 628.0 492.1 674.1 492.1 875.3 491.5 875.3 552.7 792.0 552.4 730.5 551.9 689.5 551.3 652.4 550.3 616.5 548.7 601.1 547.8 584.4 546.5 566.5 544.5 544.7 541.4 537.9 540.1 521.3 536.3 516.8 535.0 505.1 531.2 501.8 529.9 493.0 526.0 483.2 520.9 473.3 514.5 467.8 510.4 462.0 505.6 456.4 500.4 451.1 495.4 446.0 490.1 440.9 484.4 436.1 478.7 431.9 473.2 425.6 463.3 420.4 453.6 416.5 444.7 415.3 441.4 411.4 429.7 410.1 425.3 406.3 408.7 405.0 402.0 404.2 396.8 401.2 374.6 399.7 359.7 397.7 330.2 396.2 299.5 395.4 272.6 394.8 241.3 394.3 195.8 393.7 71.7 454.9 71.7Z"/>
<path fill="#4d8aff" d="M453.6 71.7 452.9 320.0 453.2 360.9 453.6 376.3 454.2 391.7 455.2 407.0 456.5 419.8 458.4 432.6 460.4 441.6 463.1 450.5 465.7 456.9 467.7 460.8 470.0 464.6 471.6 466.8 474.2 469.9 476.6 472.3 480.6 475.6 483.3 477.4 487.0 479.5 490.5 481.2 493.6 482.5 502.4 485.4 507.5 486.7 511.9 487.6 524.2 489.6 537.0 491.0 551.1 492.1 565.2 492.7 580.6 493.2 622.9 493.6 875.3 492.9 875.3 551.9 793.9 551.6 742.0 551.2 694.6 550.5 658.7 549.6 626.7 548.3 596.6 546.5 575.4 544.5 552.0 541.4 544.7 540.1 527.0 536.3 522.3 535.0 513.9 532.4 506.7 529.9 497.6 526.0 487.8 520.9 477.8 514.5 475.5 512.6 472.8 510.7 466.7 505.6 459.7 499.2 454.5 494.0 447.3 486.7 440.9 479.8 435.8 473.7 433.8 471.0 431.9 468.7 425.5 458.7 420.4 448.9 416.5 439.8 415.3 436.4 411.4 424.2 410.1 419.5 406.3 401.9 404.6 391.7 401.8 369.9 399.9 350.1 398.4 325.1 397.0 294.4 396.1 262.4 395.4 226.6 395.0 184.3 394.5 71.7 453.6 71.7Z"/>
<path fill="#4d7fff" d="M452.3 71.7 451.3 325.1 451.6 364.8 452.3 391.7 453.1 408.3 454.3 422.4 455.8 433.9 457.9 445.4 459.2 450.5 460.3 454.4 463.3 462.0 464.5 464.6 465.9 467.2 469.5 472.3 471.6 474.6 474.2 477.0 480.4 481.2 487.0 484.3 490.9 485.8 494.7 487.0 499.8 488.3 506.2 489.6 516.5 491.3 529.3 492.7 544.7 493.7 560.1 494.4 575.4 494.8 612.6 495.1 875.3 494.2 875.3 551.0 798.4 550.7 740.8 550.3 694.6 549.6 653.6 548.4 617.7 546.9 596.0 545.4 570.3 542.7 560.2 541.4 552.3 540.1 533.3 536.3 528.3 535.0 515.6 531.2 512.0 529.9 502.7 526.0 500.0 524.8 490.6 519.6 482.9 514.5 480.6 512.6 478.0 510.7 472.2 505.6 465.7 499.2 464.0 497.2 461.9 495.3 459.6 492.8 456.3 489.6 454.5 487.6 446.0 479.5 444.1 477.4 442.2 475.6 437.0 470.0 431.7 463.3 425.5 453.8 420.4 443.8 416.5 434.5 415.3 430.9 411.4 418.2 410.1 413.3 406.3 394.3 405.0 386.4 404.4 381.4 402.0 360.9 401.2 352.2 400.2 339.2 399.1 320.0 397.8 289.3 396.9 257.3 396.3 221.4 395.9 185.6 395.4 71.7 452.3 71.7Z"/>
<path fill="#4d74ff" d="M473.9 487.6 478.1 488.3 485.7 490.0 494.7 491.6 501.1 492.6 510.1 493.6 521.6 494.7 534.4 495.5 547.3 496.1 561.4 496.5 585.7 496.8 616.5 496.8 762.5 496.0 875.3 495.6 875.3 550.1 798.4 549.8 742.0 549.3 694.6 548.6 658.7 547.6 629.8 546.5 609.1 545.2 580.6 542.6 569.6 541.4 560.8 540.1 540.2 536.3 534.9 535.0 521.6 531.2 517.9 529.9 508.3 526.0 505.6 524.8 498.3 520.9 496.2 519.6 488.7 514.5 485.9 512.0 483.2 509.8 480.6 506.9 477.9 504.3 476.2 501.7 474.0 499.2 470.9 494.0 470.4 491.7 469.1 488.9 470.4 487.9 471.1 487.6 472.9 487.4 473.9 487.6ZM450.9 71.7 450.5 184.3 449.7 328.9 449.7 355.8 449.9 380.1 450.3 396.8 450.8 409.6 451.6 422.4 452.7 435.2 453.7 444.1 454.8 451.8 456.5 460.8 458.2 468.4 459.1 473.6 459.0 474.8 458.6 476.1 457.6 477.4 454.8 476.1 452.4 475.5 447.3 472.5 444.7 470.3 442.2 468.6 439.5 465.9 437.0 463.7 431.9 457.8 430.6 456.0 425.5 448.2 421.7 441.0 420.4 438.2 416.5 428.7 415.3 425.0 411.4 411.6 410.1 406.3 408.3 396.8 406.3 385.8 405.0 377.0 402.7 355.8 401.2 337.6 399.9 316.9 398.9 293.1 398.1 262.4 397.5 231.7 396.7 165.1 396.3 71.7 450.9 71.7Z"/>
<path fill="#4d68ff" d="M875.3 497.9 875.3 549.1 756.1 548.4 710.0 547.9 674.1 547.1 653.6 546.5 627.4 545.2 602.4 543.4 580.4 541.4 570.6 540.1 560.1 538.4 548.0 536.3 542.4 535.0 528.2 531.2 524.3 529.9 514.5 526.0 511.7 524.8 504.5 520.9 502.4 519.6 497.1 515.8 495.5 514.5 490.6 509.4 489.6 507.4 488.3 505.6 487.8 504.3 488.4 500.4 489.8 499.2 492.2 498.4 494.7 498.0 498.6 497.6 503.7 497.5 544.7 498.3 575.4 498.6 612.6 498.5 752.3 497.5 865.1 497.1 875.3 497.1 875.3 497.9ZM449.4 71.7 449.0 195.8 447.9 360.9 448.1 398.1 449.0 442.8 448.9 448.0 448.5 451.8 448.0 454.4 447.3 456.7 446.0 458.1 442.2 458.8 440.9 458.2 439.0 456.9 437.0 455.9 431.9 451.0 430.6 449.4 426.8 444.1 425.5 442.0 421.7 434.8 420.4 432.0 416.5 422.2 415.3 418.4 411.4 404.2 410.1 398.6 408.0 386.5 406.3 376.1 405.0 366.3 403.0 344.3 401.2 319.3 399.9 293.1 399.3 272.6 398.5 236.8 397.9 190.7 397.3 71.7 449.4 71.7Z"/>
<path fill="#4d5dff" d="M875.3 499.2 875.3 548.1 766.4 547.5 725.4 547.1 691.5 546.5 663.9 545.7 642.1 544.8 616.5 543.2 593.1 541.4 580.6 539.9 556.8 536.3 550.6 535.0 544.7 533.5 535.6 531.2 531.6 529.9 521.5 526.0 518.6 524.8 511.6 520.9 509.6 519.6 507.5 517.8 504.9 515.8 503.5 514.5 502.4 512.6 501.1 510.7 500.6 509.4 501.1 507.4 501.9 505.6 503.5 504.3 505.0 503.8 508.8 502.8 513.9 502.1 520.3 501.6 529.3 501.2 661.3 499.7 740.8 499.0 875.3 498.5 875.3 499.2ZM447.9 71.7 447.2 231.7 445.5 398.1 445.2 417.2 444.9 426.2 444.4 432.6 443.6 437.7 442.7 441.6 442.2 443.1 440.9 444.7 439.0 445.4 437.0 445.9 435.8 445.5 433.9 444.1 431.9 443.0 430.6 441.7 428.6 439.0 426.8 436.9 425.5 434.9 421.7 427.9 420.4 425.1 416.5 415.0 415.3 411.0 412.9 401.9 411.4 396.0 410.1 389.8 406.5 366.1 405.0 353.5 403.2 330.2 401.6 304.6 400.7 282.9 399.9 255.2 399.3 221.4 398.9 180.5 398.3 71.7 447.9 71.7Z"/>
<path fill="#4d52ff" d="M875.3 500.4 875.3 547.0 766.4 546.5 704.9 545.6 679.2 545.0 653.6 544.0 628.0 542.7 607.5 541.3 590.8 539.6 566.8 536.3 560.0 535.0 543.9 531.2 539.7 529.9 529.3 526.0 526.5 524.8 519.7 520.9 517.9 519.6 516.5 518.1 514.0 515.8 513.2 514.5 513.1 510.7 513.9 509.4 516.5 508.1 519.9 506.8 525.3 505.6 530.6 504.9 537.2 504.3 549.8 503.7 572.9 503.0 608.8 502.3 699.7 501.0 762.5 500.5 834.3 500.2 875.3 500.1 875.3 500.4ZM446.4 71.7 446.0 175.4 445.3 262.4 444.0 346.9 443.4 377.6 442.7 398.1 442.2 409.3 441.4 417.2 440.7 422.4 439.4 427.5 438.3 430.1 437.0 432.6 435.8 433.4 431.9 433.3 430.6 432.5 428.3 430.0 426.8 428.7 425.5 426.9 421.7 420.1 420.4 417.3 416.5 406.9 415.3 402.7 411.4 386.6 410.1 379.8 406.8 355.8 405.1 339.2 403.7 318.7 402.4 293.1 401.4 267.5 400.8 241.9 399.9 180.5 399.3 71.7 446.4 71.7Z"/>
<path fill="#4d4df9" d="M875.3 503.0 875.3 545.9 772.8 545.4 710.0 544.4 679.2 543.6 653.6 542.7 628.2 541.4 611.7 540.1 596.0 538.4 578.5 536.3 570.9 535.0 565.2 533.8 553.4 531.2 548.9 529.9 538.2 526.0 535.4 524.8 529.0 520.9 527.5 519.6 525.2 515.8 525.1 514.5 526.8 512.8 529.4 510.7 533.0 509.4 539.6 508.2 549.8 507.0 560.1 506.2 571.6 505.5 590.8 504.8 620.3 504.0 665.1 503.2 715.1 502.6 771.5 502.2 875.3 501.7 875.3 503.0ZM444.7 71.7 444.3 174.1 443.6 252.2 442.6 320.0 442.2 339.3 441.4 363.5 440.9 376.3 440.0 390.4 439.1 400.6 438.0 408.3 437.0 413.5 435.8 417.2 433.7 419.8 431.9 421.4 430.6 421.4 426.8 419.0 425.5 417.5 421.7 411.2 420.4 408.4 416.5 397.7 415.3 393.2 412.7 381.4 411.4 375.7 410.1 368.1 408.0 350.7 406.3 335.0 405.0 318.5 403.7 293.1 402.8 267.5 402.0 236.8 401.0 174.1 400.5 71.7 444.7 71.7Z"/>
<path fill="#4d4dee" d="M875.3 504.3 875.3 544.7 786.9 544.2 720.3 543.3 694.6 542.7 667.7 541.9 653.6 541.3 632.8 540.1 612.6 538.4 592.4 536.3 583.8 535.0 564.3 531.2 559.6 529.9 548.5 526.0 545.7 524.8 540.1 520.9 539.0 519.6 538.9 515.8 540.1 514.5 544.7 512.7 552.0 510.7 560.1 509.5 566.5 508.9 580.6 507.9 596.0 507.1 617.7 506.3 643.4 505.5 679.2 504.8 721.0 504.3 788.2 503.8 875.3 503.4 875.3 504.3ZM443.0 71.7 442.6 174.1 441.9 247.0 440.9 304.6 440.1 331.5 439.2 354.5 438.3 369.9 437.5 381.4 436.8 387.8 435.6 395.5 433.8 401.9 431.9 406.5 430.6 407.7 426.8 407.6 425.5 406.5 421.7 400.8 420.4 398.1 416.5 387.0 415.3 382.3 411.4 362.8 410.1 354.3 408.0 334.1 406.3 313.9 405.1 293.1 404.5 279.0 403.7 252.2 403.1 226.6 402.2 160.0 401.7 71.7 443.0 71.7Z"/>
<path fill="#4d4de3" d="M875.3 505.6 875.3 543.3 777.9 542.7 710.0 541.7 689.5 541.2 663.9 540.2 633.1 538.2 611.3 536.4 602.4 535.4 596.0 534.4 577.3 531.2 572.1 529.9 560.6 526.0 557.9 524.8 553.3 520.9 552.8 519.6 554.9 517.1 556.2 515.8 559.4 514.5 565.5 513.2 574.2 511.8 583.9 510.7 599.8 509.5 611.3 508.9 633.1 508.1 658.7 507.4 725.4 506.2 776.6 505.7 834.3 505.4 875.3 505.2 875.3 505.6ZM441.2 71.7 440.8 160.0 440.1 233.0 439.0 290.5 438.3 314.1 437.5 335.3 436.9 346.9 435.8 362.7 434.6 372.5 433.2 381.2 431.9 387.2 430.6 390.4 429.4 391.7 426.8 393.8 425.5 393.3 421.7 388.7 420.4 386.0 416.5 374.5 415.3 369.4 412.0 350.7 411.0 344.3 410.0 335.3 408.2 313.6 406.2 282.9 405.2 257.3 404.7 236.8 403.7 169.0 403.1 71.7 441.2 71.7Z"/>
<path fill="#4d4dd8" d="M875.3 508.1 875.3 541.9 785.3 541.4 725.4 540.5 704.9 539.9 679.2 539.0 658.7 538.0 638.2 536.7 631.9 536.3 617.7 534.8 593.0 531.2 587.2 529.9 575.1 526.0 572.6 524.8 569.4 520.9 569.8 519.6 575.4 517.0 578.6 515.8 584.9 514.5 596.0 513.2 607.5 512.2 622.9 511.1 638.2 510.4 663.9 509.5 684.4 509.0 720.3 508.4 761.3 507.9 875.3 507.2 875.3 508.1ZM439.2 71.7 438.8 158.7 438.1 226.6 437.0 280.9 435.9 313.6 435.1 327.7 434.1 340.5 433.2 350.7 431.9 361.7 430.6 368.0 429.5 371.2 426.8 376.8 425.5 377.2 421.7 374.0 420.4 371.5 416.5 359.4 415.3 353.7 411.6 328.9 410.1 314.8 409.7 308.5 408.4 288.0 407.4 267.5 406.5 241.9 405.9 221.4 405.0 161.6 404.5 71.7 439.2 71.7Z"/>
<path fill="#4d4dcd" d="M875.3 509.4 875.3 540.3 803.5 539.8 745.9 539.0 694.6 537.6 674.1 536.8 658.7 535.9 645.8 535.0 631.8 533.5 612.9 531.2 606.2 529.9 593.1 526.0 590.8 524.8 589.8 520.9 591.7 519.6 596.0 518.5 603.6 516.8 611.3 515.5 620.9 514.5 628.0 514.0 643.4 513.1 661.3 512.3 699.7 511.1 745.9 510.2 824.1 509.5 875.3 509.2 875.3 509.4ZM437.2 71.7 436.8 144.6 436.1 207.4 435.3 249.6 434.0 288.0 432.3 320.0 431.9 325.7 430.6 337.5 429.1 345.6 427.6 352.0 426.8 354.9 425.5 356.8 421.6 355.8 420.4 353.5 416.5 340.5 415.3 333.8 412.9 314.9 411.4 300.9 410.5 288.0 409.6 272.6 408.8 252.2 407.4 201.0 406.6 143.4 406.1 71.7 437.2 71.7Z"/>
<path fill="#4d4dc2" d="M875.3 512.0 875.3 538.2 808.7 537.8 756.1 537.1 717.3 536.3 686.7 535.0 663.9 533.3 639.7 531.2 631.4 529.9 616.5 526.0 614.5 524.8 617.2 520.9 621.6 519.6 633.1 518.0 648.5 516.4 655.5 515.8 674.1 514.8 710.0 513.6 761.3 512.7 844.6 511.9 875.3 511.7 875.3 512.0ZM434.7 71.7 434.3 139.5 433.6 195.8 432.7 241.9 431.9 267.1 431.5 276.5 430.6 291.2 429.8 300.8 428.4 313.6 426.8 325.1 425.5 329.5 421.7 332.1 420.4 330.1 416.5 315.3 415.3 307.0 413.1 282.9 411.4 260.0 410.1 229.5 409.3 190.7 408.6 138.3 408.2 71.7 434.7 71.7Z"/>
<path fill="#4d4db6" d="M875.3 514.5 875.3 536.1 818.9 535.7 773.0 535.0 735.6 533.9 704.9 532.5 680.7 531.2 668.5 529.9 649.8 526.0 648.3 524.8 653.6 522.5 658.0 520.9 663.9 520.1 667.5 519.6 679.2 518.8 704.9 517.4 740.8 516.1 771.5 515.4 839.4 514.6 875.3 514.4 875.3 514.5ZM432.1 71.7 431.7 128.0 430.9 180.5 430.2 211.2 429.0 241.9 427.6 267.5 426.8 279.2 426.3 282.9 425.5 288.7 423.9 293.1 421.7 298.5 420.4 296.9 416.5 278.3 415.3 266.1 413.9 241.9 412.5 211.2 411.4 173.9 410.8 128.0 410.3 71.7 432.1 71.7Z"/>
<path fill="#4d4dab" d="M875.3 518.4 875.3 532.8 797.1 531.8 765.6 531.2 751.0 530.5 738.2 529.9 715.1 527.2 706.4 526.0 705.8 524.8 720.3 522.7 736.6 520.9 761.3 519.8 786.9 519.2 824.1 518.6 875.3 518.1 875.3 518.4ZM428.3 71.7 427.5 143.4 426.9 177.9 426.5 189.4 425.5 210.3 423.7 226.6 421.7 241.0 420.4 240.4 419.2 231.7 416.5 208.6 415.9 195.8 415.3 181.2 414.6 149.8 413.6 71.7 428.3 71.7Z"/>
<g stroke="#000" stroke-opacity="0.07" stroke-width="1" fill="none"><path d="M384.5 72V613M436.5 72V613M487.5 72V613M539.5 72V613M591.5 72V613M642.5 72V613M694.5 72V613M745.5 72V613M797.5 72V613M849.5 72V613M333 561.5H875M333 509.5H875M333 458.5H875M333 406.5H875M333 355.5H875M333 303.5H875M333 252.5H875M333 200.5H875M333 149.5H875M333 97.5H875"/></g>
<g fill="none" stroke-width="1.0" stroke-linejoin="round" shape-rendering="crispEdges">
<path stroke="#0000ce" d="M875.3 541.8 792.7 541.4 756.6 541.0 735.9 540.7 704.9 539.8 679.1 538.9 653.3 537.6 632.7 536.2 625.9 535.7 622.3 535.3 606.9 533.1 590.2 530.6 573.9 525.4 570.7 521.3 569.8 520.3 570.7 519.7 575.9 517.3 581.0 515.5 582.2 515.1 586.2 514.6 596.5 513.4 612.0 512.0 627.5 511.0 648.2 510.0 663.6 509.6 684.3 509.1 710.1 508.6 735.9 508.3 797.9 507.7 875.3 507.3M439.1 71.7 438.7 149.0 438.2 210.9 437.8 236.7 437.4 262.5 436.9 283.1 436.4 298.6 435.4 319.2 434.4 334.6 433.1 350.1 431.9 360.4 431.3 364.4 431.0 365.6 429.1 370.7 426.7 375.9 426.2 376.9 425.1 375.9 421.0 372.7 415.8 356.4 413.3 339.8 411.1 324.3 410.7 320.7 410.2 314.0 408.8 293.4 407.5 267.6 406.6 241.8 405.7 210.9 405.4 190.3 405.0 154.2 404.6 71.7"/>
<path stroke="#0025ff" d="M875.3 548.4 808.2 548.1 756.6 547.8 710.1 547.2 674.0 546.4 660.7 546.0 653.3 545.7 627.5 544.4 606.9 542.9 596.5 542.1 583.5 540.9 565.6 538.2 550.7 535.7 530.9 530.6 524.3 528.0 517.5 525.4 513.9 523.4 507.9 520.3 503.6 516.8 501.2 515.1 498.4 511.4 497.1 509.9 496.9 504.8 498.4 503.6 503.6 501.7 508.8 500.9 513.9 500.5 524.3 500.1 581.0 499.9 679.1 499.0 741.1 498.6 803.0 498.3 875.3 498.1M448.4 71.7 448.2 143.9 447.9 205.8 447.4 267.6 446.6 365.6 446.3 422.3 446.0 432.6 445.6 437.8 444.7 442.9 442.8 448.1 441.7 449.6 436.5 449.4 435.1 448.1 431.3 445.3 429.7 442.9 426.2 438.6 423.0 432.6 421.0 429.1 418.5 422.3 415.8 415.6 410.7 395.9 408.2 381.0 405.5 363.1 404.3 350.1 403.5 339.8 402.0 319.2 400.7 293.4 400.4 286.1 400.0 272.8 399.2 236.7 398.6 190.3 398.3 138.7 398.0 71.7"/>
<path stroke="#007aff" d="M875.3 553.2 803.0 553.0 746.2 552.6 699.8 552.1 663.6 551.4 653.3 551.1 637.8 550.4 612.0 549.1 591.4 547.7 581.0 546.9 570.7 545.9 555.2 543.8 544.9 542.2 537.0 540.9 524.3 537.9 515.5 535.7 500.2 530.6 488.5 525.4 479.2 520.3 471.3 515.1 464.5 509.9 458.3 504.8 452.0 499.0 446.8 493.8 441.7 488.2 436.5 482.0 431.3 475.2 426.2 467.3 421.0 458.0 415.8 446.3 410.7 431.1 408.5 422.3 405.5 409.6 403.4 396.5 401.9 386.2 400.4 374.7 399.1 360.4 397.9 345.0 397.3 334.6 396.4 319.2 395.7 303.7 395.2 289.5 394.4 252.2 393.8 205.8 393.4 149.0 393.2 71.7M455.8 71.7 455.3 267.6 455.3 308.9 455.4 329.5 455.7 350.1 456.1 365.6 456.7 381.0 457.7 396.5 458.6 406.8 459.2 412.0 459.9 417.1 460.8 422.3 461.7 427.5 462.9 432.6 464.2 437.8 465.8 442.9 467.9 448.1 470.2 453.2 473.3 458.4 477.1 463.5 477.8 464.3 482.2 468.7 483.0 469.4 488.1 473.2 493.3 476.3 498.4 478.6 503.6 480.6 508.8 482.3 513.9 483.6 519.1 484.7 524.3 485.7 529.4 486.6 534.6 487.2 539.7 487.8 544.9 488.3 555.2 489.1 570.7 490.0 586.2 490.5 606.9 491.0 632.7 491.2 679.1 491.2 875.3 490.6"/>
<path stroke="#00d0ff" d="M875.3 557.2 797.9 557.0 735.9 556.6 699.8 556.2 663.6 555.4 643.0 554.8 627.5 554.2 612.0 553.5 596.5 552.7 574.9 551.2 565.6 550.2 555.2 549.0 544.9 547.7 533.8 546.0 524.3 544.1 509.8 540.9 493.0 535.7 480.4 530.6 470.3 525.4 462.3 520.6 454.6 515.1 448.4 509.9 442.8 504.8 436.5 498.1 433.5 494.5 431.3 491.8 425.8 484.2 421.0 476.2 415.8 466.1 410.7 453.5 405.5 436.8 402.3 422.3 400.4 412.8 398.7 401.7 397.4 391.4 396.2 381.0 395.2 371.7 393.7 350.1 392.8 334.6 392.1 319.2 391.6 303.7 390.9 283.1 390.2 247.0 389.8 210.9 389.4 149.0 389.2 71.7M462.4 71.7 462.2 231.5 462.2 267.6 462.3 293.4 462.6 319.2 463.1 339.8 463.6 355.3 464.4 370.7 465.2 381.0 465.7 386.2 466.9 396.5 467.6 401.7 468.4 406.8 469.4 412.0 470.5 417.1 471.8 422.3 473.4 427.5 475.2 432.6 477.8 438.6 480.0 442.9 483.0 447.7 487.2 453.2 488.1 454.3 492.2 458.4 493.3 459.3 498.4 463.3 503.6 466.5 508.8 469.1 513.9 471.3 519.1 473.1 524.3 474.7 529.4 476.0 534.6 477.1 539.7 478.1 550.1 479.6 555.2 480.3 560.4 480.8 570.7 481.7 586.2 482.6 601.7 483.3 622.3 483.8 648.2 484.1 674.0 484.2 710.1 484.3 875.3 484.0"/>
<path stroke="#27ffd8" d="M875.3 560.5 797.9 560.3 741.1 559.9 694.6 559.4 674.0 559.1 653.3 558.6 622.3 557.7 606.9 557.1 592.4 556.3 581.0 555.5 565.6 554.2 555.2 553.2 544.9 552.0 538.1 551.2 529.4 549.8 519.1 547.9 509.8 546.0 498.4 543.0 491.0 540.9 477.8 536.0 472.6 533.7 466.1 530.6 457.1 525.4 449.7 520.3 446.8 518.0 443.3 515.1 437.7 509.9 432.8 504.8 431.3 503.2 428.4 499.6 426.2 496.8 421.0 489.3 415.8 480.4 410.7 469.5 405.5 455.5 403.4 448.1 400.4 436.8 398.5 427.5 396.6 417.1 395.2 408.5 394.4 401.7 393.2 391.4 392.2 381.0 390.9 365.6 390.0 354.3 389.3 339.8 388.7 324.3 387.7 293.4 387.3 272.8 386.9 252.2 386.4 205.8 386.1 149.0 385.9 71.7M468.5 71.7 468.4 216.1 468.4 252.2 468.6 283.1 469.0 308.9 469.5 329.5 469.9 339.8 470.4 350.1 471.4 365.6 471.9 370.7 472.9 381.0 474.3 391.4 475.1 396.5 476.1 401.7 477.3 406.8 478.6 412.0 480.1 417.1 481.8 422.3 483.9 427.5 486.4 432.6 488.1 435.6 489.4 437.8 493.1 442.9 497.6 448.1 498.4 448.9 503.6 453.4 508.8 457.1 510.9 458.4 513.9 460.1 519.1 462.6 524.3 464.7 529.4 466.4 534.6 467.9 539.7 469.2 544.9 470.4 550.1 471.4 555.2 472.2 565.6 473.6 575.9 474.6 581.0 475.1 596.5 476.1 606.9 476.6 617.2 477.0 637.8 477.5 663.6 477.9 694.6 478.1 730.8 478.1 875.3 478.0"/>
<path stroke="#7cff83" d="M875.3 563.4 797.9 563.2 741.1 562.9 694.6 562.5 653.3 561.8 639.3 561.5 627.5 561.1 612.0 560.5 596.5 559.7 581.0 558.8 570.7 558.1 560.4 557.3 550.1 556.3 539.7 555.0 529.4 553.6 519.1 552.0 513.9 551.1 503.6 548.8 492.4 546.0 483.0 543.0 476.8 540.9 464.8 535.7 455.2 530.6 452.0 528.6 447.1 525.4 440.4 520.3 434.7 515.1 431.3 511.8 426.2 506.0 421.2 499.6 415.8 491.3 410.7 481.7 407.3 473.9 405.2 468.7 400.4 454.1 397.6 442.9 395.3 432.6 394.4 427.5 392.8 417.1 391.3 406.8 390.0 396.4 389.1 386.2 388.3 375.9 387.6 365.6 386.6 350.1 385.9 334.6 385.3 319.2 384.9 307.4 384.5 293.4 383.9 252.2 383.5 205.8 383.2 149.0 383.0 71.7M474.2 71.7 474.2 205.8 474.3 241.8 474.5 272.8 474.9 298.6 475.4 319.2 475.8 329.5 476.3 339.8 477.4 355.3 478.3 365.6 478.8 370.7 480.2 381.0 481.0 386.2 481.9 391.4 483.0 396.5 484.2 401.7 485.6 406.8 487.3 412.0 489.2 417.1 491.5 422.3 493.3 425.8 494.2 427.5 497.4 432.6 498.4 434.0 501.4 437.8 503.6 440.2 506.3 442.9 508.8 445.1 512.5 448.1 513.9 449.1 519.1 452.3 524.3 455.0 529.4 457.3 534.6 459.2 539.7 460.9 544.9 462.3 550.1 463.5 555.2 464.6 560.4 465.5 570.7 467.0 575.9 467.7 586.2 468.7 601.7 469.9 612.0 470.4 622.3 470.9 643.0 471.5 668.8 471.9 699.8 472.2 735.9 472.3 875.3 472.3"/>
<path stroke="#d2ff2d" d="M875.3 566.1 797.9 565.9 735.9 565.6 689.5 565.1 653.3 564.5 632.7 564.0 617.2 563.5 601.7 562.9 586.2 562.1 574.9 561.5 565.6 560.8 555.2 559.9 544.9 558.8 534.6 557.7 524.4 556.3 508.8 553.5 497.3 551.2 488.1 548.7 479.1 546.0 472.6 543.7 465.6 540.9 455.0 535.7 446.8 530.9 441.7 527.3 439.1 525.4 436.5 523.3 433.0 520.3 431.3 518.7 427.7 515.1 426.2 513.4 423.2 509.9 421.0 507.3 419.1 504.8 415.5 499.6 410.7 491.5 409.6 489.3 405.5 480.9 402.7 473.9 400.4 467.4 399.2 463.5 396.3 453.2 394.9 448.1 392.8 437.8 390.1 422.3 388.1 406.8 387.0 396.5 386.0 386.2 384.9 371.8 384.5 365.6 383.7 350.1 383.1 334.6 382.6 319.2 382.0 298.6 381.3 257.3 380.8 210.9 380.5 149.0 380.3 71.7M479.7 71.7 479.7 200.6 479.9 236.7 480.1 267.6 480.6 293.4 481.2 314.0 481.6 324.3 482.2 334.6 483.3 350.1 484.3 360.4 484.9 365.6 486.3 375.9 487.2 381.0 488.2 386.2 489.3 391.4 490.6 396.5 492.1 401.7 493.9 406.8 495.9 412.0 498.4 417.4 501.2 422.3 503.6 426.1 504.6 427.5 508.8 432.7 513.9 437.8 519.1 442.0 520.5 442.9 524.3 445.4 529.4 448.2 534.6 450.6 539.7 452.6 544.9 454.4 550.1 455.9 555.2 457.2 560.8 458.4 565.6 459.3 570.7 460.2 575.9 460.9 581.0 461.6 591.4 462.7 606.9 464.0 617.2 464.6 627.5 465.1 648.2 465.8 674.0 466.3 704.9 466.6 741.1 466.8 875.3 466.8"/>
<path stroke="#ffd700" d="M875.3 568.4 792.7 568.2 730.8 568.0 684.3 567.5 643.0 566.9 632.7 566.6 612.0 565.9 586.2 564.7 565.6 563.4 555.2 562.7 542.1 561.5 529.4 559.9 519.1 558.5 508.8 556.8 503.6 555.8 493.3 553.5 483.9 551.2 477.8 549.3 468.2 546.0 462.3 543.5 456.3 540.9 446.7 535.7 439.0 530.6 436.5 528.7 432.4 525.4 426.8 520.3 421.9 515.1 417.7 509.9 415.8 507.5 410.7 499.7 405.5 490.2 402.9 484.2 400.4 478.2 397.1 468.7 395.2 462.6 392.9 453.2 390.5 442.9 389.6 437.8 387.9 427.5 386.4 417.1 384.9 404.5 383.7 391.4 382.9 381.0 381.6 360.4 380.4 334.6 379.8 314.0 379.5 303.7 378.8 262.5 378.4 216.1 378.1 154.2 378.0 71.7M485.0 71.7 485.1 195.4 485.3 231.5 485.6 262.5 486.1 288.2 486.8 308.9 487.2 319.2 487.8 329.5 489.0 345.0 490.0 355.3 490.6 360.4 492.2 370.7 493.1 375.9 494.1 381.0 495.3 386.2 496.6 391.4 498.2 396.5 500.0 401.7 502.1 406.8 504.6 412.0 507.6 417.1 508.8 419.0 511.1 422.3 513.9 425.8 515.4 427.5 519.1 431.1 520.8 432.6 524.3 435.4 527.6 437.8 529.4 439.0 534.6 441.9 539.7 444.4 544.9 446.5 549.4 448.1 555.2 449.9 560.4 451.2 565.6 452.4 570.7 453.4 575.9 454.4 586.2 455.9 591.4 456.5 601.7 457.5 617.2 458.7 627.5 459.3 637.8 459.8 658.5 460.4 684.3 460.9 715.3 461.2 751.4 461.4 875.3 461.5"/>
<path stroke="#ff8100" d="M875.3 570.6 792.7 570.5 735.9 570.2 689.5 569.8 648.2 569.2 627.5 568.7 612.0 568.2 596.5 567.7 581.0 567.0 575.2 566.7 560.4 565.6 550.1 564.7 539.7 563.8 529.4 562.6 520.2 561.5 513.9 560.5 503.6 558.7 491.8 556.3 483.0 554.0 472.6 551.1 467.5 549.2 459.3 546.0 452.0 542.6 448.5 540.9 441.7 536.8 439.9 535.7 436.5 533.4 432.7 530.6 431.3 529.5 426.2 525.0 421.0 519.8 416.9 515.1 415.8 513.7 413.0 509.9 410.7 506.6 405.5 497.9 401.3 489.3 400.4 487.2 399.1 484.2 395.2 473.5 392.3 463.5 390.0 454.7 387.7 442.9 385.0 427.5 384.4 422.3 383.2 412.0 382.1 401.7 381.2 391.4 380.4 381.0 379.7 370.7 378.9 355.3 378.3 339.8 377.8 324.3 377.3 303.7 376.6 262.5 376.2 216.1 375.9 154.2 375.7 71.7M490.3 71.7 490.3 190.3 490.5 226.4 490.9 257.3 491.4 283.1 492.1 303.7 492.6 314.0 493.2 324.3 494.5 339.8 495.5 350.1 496.2 355.3 496.9 360.4 498.4 369.4 499.8 375.9 501.0 381.0 502.4 386.2 504.0 391.4 505.9 396.5 508.0 401.7 510.6 406.8 513.6 412.0 517.2 417.1 519.1 419.4 521.6 422.3 524.3 424.9 527.1 427.5 529.4 429.3 534.6 432.9 539.7 435.9 544.9 438.5 550.1 440.7 555.2 442.5 560.4 444.1 565.6 445.5 570.7 446.8 577.2 448.1 586.2 449.6 591.4 450.3 596.5 451.0 606.9 452.1 622.3 453.3 632.7 453.9 643.0 454.4 663.6 455.1 689.5 455.6 720.4 456.0 756.6 456.2 875.3 456.3"/>
<path stroke="#ff2c00" d="M875.3 572.8 787.5 572.7 730.8 572.4 689.5 572.1 653.3 571.5 632.7 571.0 617.2 570.6 601.7 570.0 586.2 569.4 570.7 568.6 560.4 567.9 550.1 567.2 539.7 566.2 524.3 564.4 513.9 563.0 503.8 561.5 498.4 560.4 488.1 558.2 480.3 556.3 472.6 554.1 463.9 551.2 457.1 548.5 451.5 546.0 441.7 540.8 433.9 535.7 431.3 533.8 427.2 530.6 421.6 525.4 416.8 520.3 412.6 515.1 410.7 512.6 405.6 504.8 400.4 494.9 397.9 489.3 395.2 482.6 392.3 473.9 390.0 466.2 388.2 458.4 385.9 448.1 384.9 442.7 383.3 432.6 381.9 422.3 380.1 406.8 379.2 396.5 378.5 386.2 377.8 375.9 377.0 360.4 376.3 345.0 375.8 329.5 375.3 314.0 374.9 293.4 374.3 257.3 373.9 216.1 373.7 159.3 373.6 71.7M495.4 71.7 495.4 138.7 495.5 185.1 495.7 221.2 496.1 252.2 496.7 277.9 497.4 298.6 497.9 308.9 498.5 319.2 499.8 334.6 500.9 345.0 501.6 350.1 503.2 360.4 504.2 365.6 505.3 370.7 506.5 375.9 507.9 381.0 509.6 386.2 511.5 391.4 513.7 396.5 516.3 401.7 519.4 406.8 523.0 412.0 524.3 413.5 527.5 417.1 529.4 419.0 533.1 422.3 534.6 423.5 540.1 427.5 544.9 430.3 550.1 432.9 555.2 435.1 560.4 437.0 565.6 438.6 570.7 440.0 575.9 441.3 581.0 442.4 586.2 443.3 596.5 444.9 601.7 445.6 612.0 446.7 627.5 448.0 637.8 448.6 648.2 449.1 668.8 449.9 694.6 450.4 725.6 450.8 761.7 451.0 808.2 451.1 875.3 451.1"/>
<path stroke="#da0000" d="M875.3 574.9 777.2 574.8 715.3 574.6 668.8 574.4 637.8 573.9 622.3 573.6 606.9 572.9 596.5 572.3 592.0 571.8 575.9 571.0 555.2 569.7 544.9 569.3 539.7 569.0 534.6 568.6 529.4 568.0 524.3 567.1 522.7 566.7 508.8 564.6 498.4 563.5 493.3 562.4 490.9 561.5 483.0 559.6 477.8 558.6 472.6 557.3 470.6 556.3 462.3 553.5 457.1 551.9 456.0 551.2 452.0 549.4 446.8 547.3 444.9 546.0 436.5 541.4 435.9 540.9 431.3 537.7 428.6 535.7 426.2 533.8 422.4 530.6 421.0 529.3 415.8 524.0 412.6 520.3 410.7 517.9 408.7 515.1 405.5 510.6 405.0 509.9 400.4 501.6 399.1 499.6 397.0 494.5 395.2 490.4 394.5 489.3 392.9 484.2 390.0 475.8 389.1 473.9 387.8 468.7 386.8 463.5 384.9 455.6 384.0 453.2 382.9 448.1 381.7 437.8 379.7 423.8 379.3 422.3 378.4 417.1 377.8 412.0 377.4 406.8 377.1 401.7 376.7 391.4 375.4 370.7 374.5 354.7 374.1 350.1 373.4 339.8 372.8 324.3 372.4 308.9 372.0 277.9 371.7 231.5 371.6 169.7 371.5 71.7M500.4 71.7 500.5 138.7 500.6 185.1 500.9 221.2 501.2 247.0 501.8 272.8 502.6 293.4 503.1 303.7 503.7 314.0 505.0 329.5 506.2 339.8 506.9 345.0 508.5 355.3 509.5 360.4 510.6 365.6 511.9 370.7 513.3 375.9 515.0 381.0 516.9 386.2 519.1 391.2 521.8 396.5 524.9 401.7 528.6 406.8 533.2 412.0 534.6 413.4 539.7 417.9 544.9 421.6 545.9 422.3 550.1 424.7 555.2 427.4 560.4 429.6 565.6 431.5 570.7 433.2 575.9 434.7 581.0 435.9 586.2 437.0 591.4 438.0 601.7 439.7 606.9 440.3 617.2 441.5 632.7 442.8 643.0 443.4 653.3 444.0 674.0 444.7 699.8 445.3 725.6 445.7 761.7 445.9 808.2 446.0 875.3 446.1"/>
<path stroke="#800000" d="M875.3 577.0 560.4 577.0 555.2 571.8 508.8 571.8 503.6 566.7 483.0 566.7 477.8 561.5 467.5 561.5 462.3 556.3 452.0 556.3 446.8 551.2 441.7 551.2 436.5 546.0 431.3 546.0 421.0 535.7 400.4 515.1 400.4 509.9 395.2 504.8 395.2 499.6 390.0 494.5 390.0 484.2 384.9 479.0 384.9 468.7 379.7 463.5 379.7 442.9 374.5 437.8 374.5 391.4 369.4 386.2 369.4 71.7M508.8 71.7 508.8 303.7 513.9 308.9 513.9 350.1 519.1 355.3 519.1 370.7 524.3 375.9 524.3 381.0 529.4 386.2 529.4 391.4 534.6 396.5 534.6 401.7 544.9 412.0 550.1 412.0 555.2 417.1 560.4 417.1 565.6 422.3 570.7 422.3 575.9 427.5 591.4 427.5 596.5 432.6 637.8 432.6 643.0 437.8 875.3 437.8"/>
</g>
<g stroke="#6a0b0b" stroke-width="1" fill="none"><path d="M333.5 72V612.5H875M384.5 612V607M436.5 612V607M487.5 612V607M539.5 612V607M591.5 612V607M642.5 612V607M694.5 612V607M745.5 612V607M797.5 612V607M849.5 612V607M333 561.5H339M333 509.5H339M333 458.5H339M333 406.5H339M333 355.5H339M333 303.5H339M333 252.5H339M333 200.5H339M333 149.5H339M333 97.5H339"/></g>
<path d="M415.0 66.0C415.2 67.0 415.4 69.7 416.0 72.0C416.6 74.3 417.8 77.0 418.8 80.0C419.8 83.0 421.1 86.7 422.0 90.0C422.9 93.3 423.6 96.7 424.3 100.0C425.0 103.3 425.6 106.8 426.1 110.0C426.6 113.2 427.2 116.3 427.5 119.0C427.8 121.7 428.0 123.3 427.9 126.0C427.8 128.7 427.8 131.8 427.0 135.0C426.2 138.2 424.5 141.7 423.3 145.0C422.1 148.3 420.8 151.7 419.7 155.0C418.6 158.3 417.4 161.8 416.5 165.0C415.6 168.2 414.7 171.3 414.2 174.0C413.7 176.7 413.1 178.3 413.3 181.0C413.5 183.7 414.4 186.7 415.1 190.0C415.9 193.3 417.0 197.7 417.8 201.0C418.6 204.3 419.4 207.2 420.2 210.0C421.0 212.8 421.7 215.3 422.6 218.0C423.5 220.7 424.6 223.2 425.4 226.0C426.2 228.8 427.1 232.3 427.5 235.0C427.9 237.7 428.0 239.7 428.0 242.0C428.0 244.3 427.9 246.7 427.6 249.0C427.3 251.3 426.9 253.3 426.2 256.0C425.5 258.7 424.4 261.8 423.3 265.0C422.2 268.2 420.8 271.8 419.7 275.0C418.6 278.2 417.5 281.2 416.7 284.0C415.9 286.8 415.0 289.3 414.7 292.0C414.4 294.7 414.6 297.0 415.1 300.0C415.6 303.0 417.0 306.7 417.8 310.0C418.6 313.3 419.2 316.7 420.1 320.0C421.0 323.3 422.2 326.7 423.3 330.0C424.4 333.3 426.0 336.8 427.0 340.0C428.0 343.2 428.9 346.1 429.4 349.0C429.9 351.9 430.0 354.8 429.9 357.5C429.8 360.2 429.4 362.6 428.8 365.0C428.2 367.4 427.3 369.3 426.1 372.0C424.9 374.7 422.9 377.8 421.6 381.0C420.4 384.2 418.9 388.2 418.6 391.0C418.3 393.8 419.0 396.0 419.8 398.0C420.6 400.0 422.1 401.5 423.2 403.0C424.3 404.5 425.4 405.7 426.5 407.2C427.6 408.7 428.8 410.2 430.0 411.8C431.2 413.4 432.8 415.4 434.0 417.0C435.2 418.6 436.5 420.2 437.2 421.5C437.9 422.8 438.3 423.9 438.0 425.0C437.7 426.1 436.6 427.5 435.5 427.8C434.4 428.1 432.9 427.7 431.5 427.0C430.1 426.3 428.3 424.8 427.0 423.5C425.7 422.2 424.2 420.5 423.5 419.0C422.8 417.5 422.6 416.0 422.6 414.5C422.6 413.0 423.0 411.2 423.6 410.0C424.2 408.8 425.4 408.7 426.5 407.2C427.6 405.7 429.6 403.0 430.5 401.0C431.4 399.0 431.8 397.5 432.0 395.0C432.2 392.5 431.9 388.8 431.5 386.0C431.1 383.2 430.4 380.3 429.5 378.0C428.6 375.7 427.1 374.2 426.1 372.0C425.1 369.8 424.3 367.8 423.3 365.0C422.3 362.2 421.2 358.3 420.1 355.0C419.0 351.7 417.7 348.0 416.9 345.0C416.1 342.0 415.1 339.7 415.1 337.0C415.1 334.3 415.9 331.8 416.7 329.0C417.5 326.2 418.8 323.2 420.1 320.0C421.4 316.8 423.2 313.3 424.3 310.0C425.4 306.7 426.0 303.2 426.5 300.0C427.0 296.8 427.4 293.8 427.5 291.0C427.6 288.2 427.6 285.7 427.4 283.0C427.2 280.3 426.9 278.0 426.2 275.0C425.5 272.0 424.2 268.2 423.3 265.0C422.4 261.8 421.7 258.8 420.8 256.0C419.9 253.2 418.7 251.0 417.8 248.0C416.9 245.0 415.9 241.2 415.4 238.0C414.9 234.8 414.8 232.0 414.7 229.0C414.6 226.0 414.7 223.0 415.0 220.0C415.3 217.0 415.7 213.6 416.3 211.0C416.9 208.4 417.8 206.1 418.5 204.5C419.2 202.9 420.4 202.0 420.8 201.5" fill="none" stroke="#000" stroke-width="5.1" stroke-linejoin="round" stroke-linecap="round" shape-rendering="crispEdges"/>
</g>
<g font-family="Liberation Sans" font-size="13" fill="#262626"><text x="333.5" y="632" text-anchor="middle">0.4</text><text x="385.1" y="632" text-anchor="middle">0.6</text><text x="436.7" y="632" text-anchor="middle">0.8</text><text x="488.4" y="632" text-anchor="middle">1</text><text x="540.0" y="632" text-anchor="middle">1.2</text><text x="591.6" y="632" text-anchor="middle">1.4</text><text x="643.2" y="632" text-anchor="middle">1.6</text><text x="694.8" y="632" text-anchor="middle">1.8</text><text x="746.5" y="632" text-anchor="middle">2</text><text x="798.1" y="632" text-anchor="middle">2.2</text><text x="849.7" y="632" text-anchor="middle">2.4</text><text x="327" y="619.6" text-anchor="end">0.4</text><text x="327" y="568.0" text-anchor="end">0.6</text><text x="327" y="516.4" text-anchor="end">0.8</text><text x="327" y="464.9" text-anchor="end">1</text><text x="327" y="413.3" text-anchor="end">1.2</text><text x="327" y="361.8" text-anchor="end">1.4</text><text x="327" y="310.2" text-anchor="end">1.6</text><text x="327" y="258.7" text-anchor="end">1.8</text><text x="327" y="207.1" text-anchor="end">2</text><text x="327" y="155.5" text-anchor="end">2.2</text><text x="327" y="104.0" text-anchor="end">2.4</text></g>
<text x="604" y="650" font-family="Liberation Serif" font-size="16.4" fill="#262626" text-anchor="middle">A-B bond distance (Å)</text>
<text transform="translate(300.6 341) rotate(-90)" x="0" y="0" font-family="Liberation Serif" font-size="16.4" fill="#262626" text-anchor="middle">B-C bond distance (Å)</text>
</svg>
</body></html>
